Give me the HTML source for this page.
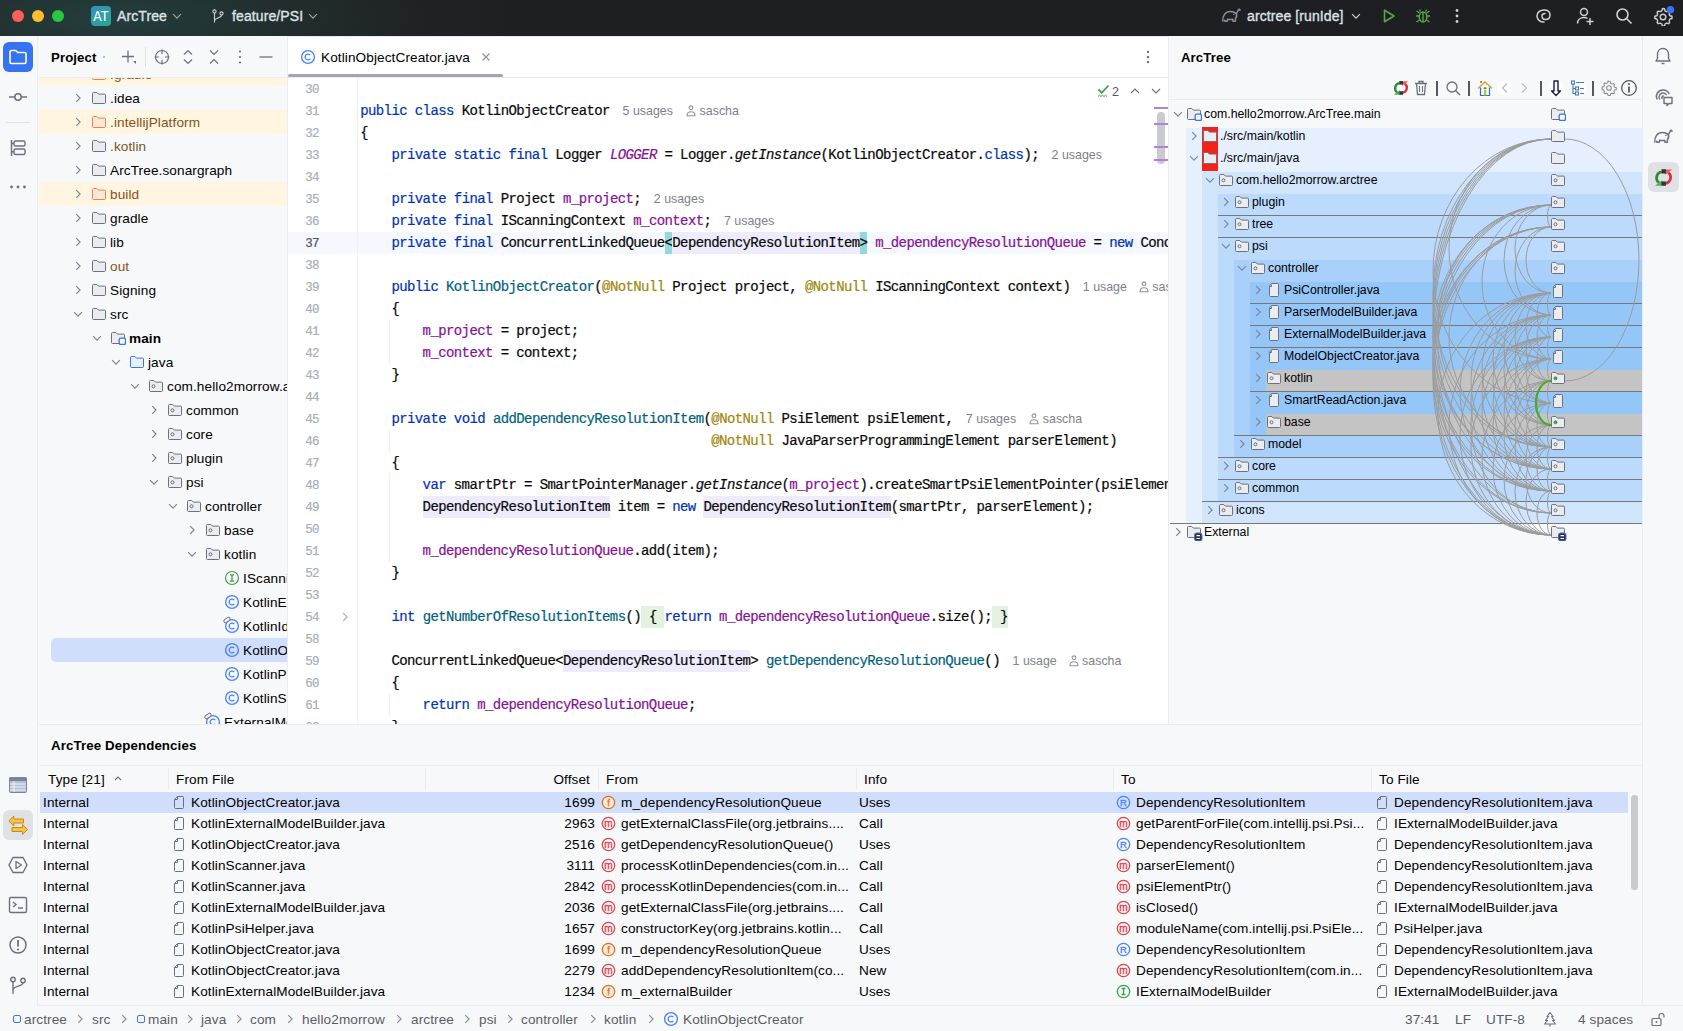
<!DOCTYPE html><html><head><meta charset="utf-8"><style>
*{box-sizing:border-box}
html,body{margin:0;padding:0}
body{width:1683px;height:1031px;position:relative;overflow:hidden;background:#F7F8FA;font-family:"Liberation Sans",sans-serif;color:#000}
div{position:absolute}
.t{white-space:pre;height:20px;line-height:20px;font-size:13.6px;color:#000;letter-spacing:0.1px}
.code{white-space:pre;font-family:"Liberation Mono",monospace;font-size:14px;letter-spacing:-0.6px;height:22px;line-height:22px;color:#080808;-webkit-text-stroke:0.2px currentColor}
.hint{font-family:"Liberation Sans",sans-serif;font-size:12.4px;color:#7D8187}
.kw{color:#0033B3}.fld{color:#871094}.ann{color:#9E880D}.mdecl{color:#00627A}.it{font-style:italic}
.lav,.teal,.fold{display:inline-block;height:22px;vertical-align:top}.lav{background:#EDEBFC}.teal{background:#93D9D9}.fold{background:#E3F1DE}
</style></head><body><div style="left:0;top:0;width:1683px;height:36px;background:radial-gradient(ellipse 420px 120px at 110px 18px,#243D3E 0%,#22302F 35%,#1F2224 75%,#1E1F22 100%)"></div><svg style="position:absolute;left:11px;top:9px;" width="14" height="14" viewBox="0 0 14 14"><circle cx="7" cy="7" r="6" fill="#FE5F57"/></svg><svg style="position:absolute;left:31px;top:9px;" width="14" height="14" viewBox="0 0 14 14"><circle cx="7" cy="7" r="6" fill="#FEBC2E"/></svg><svg style="position:absolute;left:51px;top:9px;" width="14" height="14" viewBox="0 0 14 14"><circle cx="7" cy="7" r="6" fill="#28C840"/></svg><div style="left:91px;top:6px;width:20px;height:20px;border-radius:4px;background:linear-gradient(135deg,#2F94C2,#2AA68C);color:#fff;font-size:14px;line-height:22px;text-align:center;font-family:'Liberation Mono';letter-spacing:-1.2px;text-indent:-1px">AT</div><div class="t" style="left:117px;top:6px;color:#DFE1E5;font-size:14px;-webkit-text-stroke:0.35px #DFE1E5">ArcTree</div><svg style="position:absolute;left:169px;top:8px;" width="16" height="16" viewBox="0 0 16 16"><path d="M4.1 6.2l3.9 3.9 3.9-3.9" stroke="#9DA0A8" stroke-width="1.2" fill="none"/></svg><svg style="position:absolute;left:210px;top:8px;" width="16" height="16" viewBox="0 0 16 16"><circle cx="4.5" cy="3.5" r="1.6" fill="none" stroke="#CED0D6" stroke-width="1.1"/><circle cx="11.5" cy="5.5" r="1.6" fill="none" stroke="#CED0D6" stroke-width="1.1"/><path d="M4.5 5.2v9.3M11.5 7.2c0 3-7 2.5-7 5.5" fill="none" stroke="#CED0D6" stroke-width="1.1"/></svg><div class="t" style="left:232px;top:6px;color:#DFE1E5;font-size:14px;-webkit-text-stroke:0.35px #DFE1E5">feature/PSI</div><svg style="position:absolute;left:305px;top:8px;" width="16" height="16" viewBox="0 0 16 16"><path d="M4.1 6.2l3.9 3.9 3.9-3.9" stroke="#9DA0A8" stroke-width="1.2" fill="none"/></svg><svg style="position:absolute;left:1221px;top:7px;" width="22" height="18" viewBox="0 0 22 18"><path d="M1.8 14.2C1.2 8.8 4.6 4.6 9.2 4.6c2.6 0 4.6.8 6 2 1.2-1 1.6-2.6 2.2-3.8.5-1 1.8-.7 1.5.5" fill="none" stroke="#8C8F96" stroke-width="1.5" stroke-linecap="round"/><path d="M15.2 6.6c.8 1.8.4 3.8-.8 5v2.6h-2.3l-.5-2c-1.6.5-3.4.5-5 0l-.5 2H3.8l-.3-1.5" fill="none" stroke="#8C8F96" stroke-width="1.5" stroke-linejoin="round"/><circle cx="12.8" cy="7.4" r=".7" fill="#8C8F96"/></svg><div class="t" style="left:1247px;top:6px;color:#DFE1E5;font-size:14px;-webkit-text-stroke:0.35px #DFE1E5">arctree [runIde]</div><svg style="position:absolute;left:1348px;top:8px;" width="16" height="16" viewBox="0 0 16 16"><path d="M4.1 6.2l3.9 3.9 3.9-3.9" stroke="#CED0D6" stroke-width="1.2" fill="none"/></svg><svg style="position:absolute;left:1380px;top:7px;" width="18" height="18" viewBox="0 0 18 18"><path d="M4.5 3.2v11.6l9.5-5.8z" fill="none" stroke="#57A64A" stroke-width="1.6" stroke-linejoin="round"/></svg><svg style="position:absolute;left:1414px;top:7px;" width="18" height="18" viewBox="0 0 18 18"><ellipse cx="9" cy="10" rx="3.8" ry="5" fill="none" stroke="#57A64A" stroke-width="1.5"/><path d="M9 5v10M5.2 9H2M12.8 9H16M5.5 13l-3 2M12.5 13l3 2M5.5 6l-3-2M12.5 6l3-2M6.5 4.5l-1-2M11.5 4.5l1-2" stroke="#57A64A" stroke-width="1.4"/></svg><svg style="position:absolute;left:1449px;top:7px;" width="16" height="18" viewBox="0 0 16 18"><circle cx="8" cy="3.5" r="1.4" fill="#CED0D6"/><circle cx="8" cy="9" r="1.4" fill="#CED0D6"/><circle cx="8" cy="14.5" r="1.4" fill="#CED0D6"/></svg><svg style="position:absolute;left:1534px;top:7px;" width="20" height="18" viewBox="0 0 20 18"><path d="M10 15c-4 0-7-2.5-7-6s3-6 7-6 6 2 6 5-2 4.5-4.5 4.5S8 11 8 9s1.5-2.5 3-2.5" fill="none" stroke="#CED0D6" stroke-width="1.5" stroke-linecap="round"/></svg><svg style="position:absolute;left:1575px;top:6px;" width="20" height="20" viewBox="0 0 20 20"><circle cx="9" cy="6" r="3.5" fill="none" stroke="#CED0D6" stroke-width="1.5"/><path d="M2.5 17.5c0-4 3-6 6.5-6 1.5 0 2.5.3 3.5.8" fill="none" stroke="#CED0D6" stroke-width="1.5"/><path d="M15 12v7M11.5 15.5h7" stroke="#CED0D6" stroke-width="1.5"/></svg><svg style="position:absolute;left:1615px;top:7px;" width="18" height="18" viewBox="0 0 18 18"><circle cx="7.5" cy="7.5" r="5.5" fill="none" stroke="#CED0D6" stroke-width="1.6"/><path d="M11.5 11.5l5 5" stroke="#CED0D6" stroke-width="1.6"/></svg><svg style="position:absolute;left:1653px;top:6px;" width="22" height="20" viewBox="0 0 22 20"><path d="M10 2.5l1.5 .3.5 2 1.6.9 2-.6 1.1 1.1-.6 2 .9 1.6 2 .5v2.2l-2 .5-.9 1.6.6 2-1.1 1.1-2-.6-1.6.9-.5 2h-2.2l-.5-2-1.6-.9-2 .6-1.1-1.1.6-2-.9-1.6-2-.5v-2.2l2-.5.9-1.6-.6-2 1.1-1.1 2 .6 1.6-.9.5-2z" fill="none" stroke="#CED0D6" stroke-width="1.4" stroke-linejoin="round"/><circle cx="10" cy="11" r="2.8" fill="none" stroke="#CED0D6" stroke-width="1.4"/><circle cx="17.5" cy="3.8" r="3.7" fill="#3574F0"/></svg><div style="left:39px;top:36px;width:249px;height:42px;background:#F7F8FA;border-bottom:1px solid #EBECF0"></div><div class="t" style="left:51px;top:48px;font-weight:bold;font-size:13.2px;color:#000">Project</div><svg style="position:absolute;left:100px;top:53px;" width="8" height="8" viewBox="0 0 8 8"><circle cx="4" cy="4" r="1" fill="#A8ADBD"/></svg><svg style="position:absolute;left:119px;top:48px;" width="18" height="18" viewBox="0 0 18 18"><path d="M9 2.5v12M3 8.5h12" stroke="#6C707E" stroke-width="1.3"/><path d="M14 13l3-0v3z" fill="#6C707E"/></svg><div style="left:145px;top:47px;width:1px;height:20px;background:#DFE1E5"></div><svg style="position:absolute;left:153px;top:48px;" width="18" height="18" viewBox="0 0 18 18"><circle cx="9" cy="9" r="6.5" fill="none" stroke="#6C707E" stroke-width="1.2"/><path d="M9 1.5v4.5M9 12v4.5M1.5 9H6M12 9h4.5" stroke="#6C707E" stroke-width="1.2"/></svg><svg style="position:absolute;left:179px;top:48px;" width="18" height="18" viewBox="0 0 18 18"><path d="M5 6.5L9 2.5l4 4M5 11.5l4 4 4-4" fill="none" stroke="#6C707E" stroke-width="1.2"/></svg><svg style="position:absolute;left:205px;top:48px;" width="18" height="18" viewBox="0 0 18 18"><path d="M5 2.5l4 4 4-4M5 15.5l4-4 4 4" fill="none" stroke="#6C707E" stroke-width="1.2"/></svg><svg style="position:absolute;left:231px;top:48px;" width="18" height="18" viewBox="0 0 18 18"><circle cx="9" cy="3.5" r="1.1" fill="#6C707E"/><circle cx="9" cy="9" r="1.1" fill="#6C707E"/><circle cx="9" cy="14.5" r="1.1" fill="#6C707E"/></svg><svg style="position:absolute;left:257px;top:48px;" width="18" height="18" viewBox="0 0 18 18"><path d="M2.5 9h13" stroke="#6C707E" stroke-width="1.3"/></svg><div style="left:39px;top:78px;width:248px;height:646px;overflow:hidden"><div style="left:0;top:-16px;width:249px;height:24px;background:#FFF5E0"></div><svg style="position:absolute;left:31px;top:-12px;" width="16" height="16" viewBox="0 0 16 16"><path d="M6.2 4.1l3.9 3.9-3.9 3.9" stroke="#818594" stroke-width="1.2" fill="none"/></svg><svg style="position:absolute;left:52px;top:-13px;" width="16" height="16" viewBox="0 0 16 16"><path d="M1.5 4.5a1 1 0 0 1 1-1h3.3l1.6 1.6h6.1a1 1 0 0 1 1 1v7.4a1 1 0 0 1-1 1h-11a1 1 0 0 1-1-1z" fill="#FCE8DA" stroke="#E8834A" stroke-linejoin="round"/></svg><div class="t" style="left:71px;top:-13px;color:#84531A;">.gradle</div><svg style="position:absolute;left:31px;top:12px;" width="16" height="16" viewBox="0 0 16 16"><path d="M6.2 4.1l3.9 3.9-3.9 3.9" stroke="#818594" stroke-width="1.2" fill="none"/></svg><svg style="position:absolute;left:52px;top:11px;" width="16" height="16" viewBox="0 0 16 16"><path d="M1.5 4.5a1 1 0 0 1 1-1h3.3l1.6 1.6h6.1a1 1 0 0 1 1 1v7.4a1 1 0 0 1-1 1h-11a1 1 0 0 1-1-1z" fill="#EBECF0" stroke="#6C707E" stroke-linejoin="round"/></svg><div class="t" style="left:71px;top:11px;">.idea</div><div style="left:0;top:32px;width:249px;height:24px;background:#FFF5E0"></div><svg style="position:absolute;left:31px;top:36px;" width="16" height="16" viewBox="0 0 16 16"><path d="M6.2 4.1l3.9 3.9-3.9 3.9" stroke="#818594" stroke-width="1.2" fill="none"/></svg><svg style="position:absolute;left:52px;top:35px;" width="16" height="16" viewBox="0 0 16 16"><path d="M1.5 4.5a1 1 0 0 1 1-1h3.3l1.6 1.6h6.1a1 1 0 0 1 1 1v7.4a1 1 0 0 1-1 1h-11a1 1 0 0 1-1-1z" fill="#FCE8DA" stroke="#E8834A" stroke-linejoin="round"/></svg><div class="t" style="left:71px;top:35px;color:#84531A;">.intellijPlatform</div><svg style="position:absolute;left:31px;top:60px;" width="16" height="16" viewBox="0 0 16 16"><path d="M6.2 4.1l3.9 3.9-3.9 3.9" stroke="#818594" stroke-width="1.2" fill="none"/></svg><svg style="position:absolute;left:52px;top:59px;" width="16" height="16" viewBox="0 0 16 16"><path d="M1.5 4.5a1 1 0 0 1 1-1h3.3l1.6 1.6h6.1a1 1 0 0 1 1 1v7.4a1 1 0 0 1-1 1h-11a1 1 0 0 1-1-1z" fill="#EBECF0" stroke="#6C707E" stroke-linejoin="round"/></svg><div class="t" style="left:71px;top:59px;color:#84531A;">.kotlin</div><svg style="position:absolute;left:31px;top:84px;" width="16" height="16" viewBox="0 0 16 16"><path d="M6.2 4.1l3.9 3.9-3.9 3.9" stroke="#818594" stroke-width="1.2" fill="none"/></svg><svg style="position:absolute;left:52px;top:83px;" width="16" height="16" viewBox="0 0 16 16"><path d="M1.5 4.5a1 1 0 0 1 1-1h3.3l1.6 1.6h6.1a1 1 0 0 1 1 1v7.4a1 1 0 0 1-1 1h-11a1 1 0 0 1-1-1z" fill="#EBECF0" stroke="#6C707E" stroke-linejoin="round"/></svg><div class="t" style="left:71px;top:83px;">ArcTree.sonargraph</div><div style="left:0;top:104px;width:249px;height:24px;background:#FFF5E0"></div><svg style="position:absolute;left:31px;top:108px;" width="16" height="16" viewBox="0 0 16 16"><path d="M6.2 4.1l3.9 3.9-3.9 3.9" stroke="#818594" stroke-width="1.2" fill="none"/></svg><svg style="position:absolute;left:52px;top:107px;" width="16" height="16" viewBox="0 0 16 16"><path d="M1.5 4.5a1 1 0 0 1 1-1h3.3l1.6 1.6h6.1a1 1 0 0 1 1 1v7.4a1 1 0 0 1-1 1h-11a1 1 0 0 1-1-1z" fill="#FCE8DA" stroke="#E8834A" stroke-linejoin="round"/></svg><div class="t" style="left:71px;top:107px;color:#84531A;">build</div><svg style="position:absolute;left:31px;top:132px;" width="16" height="16" viewBox="0 0 16 16"><path d="M6.2 4.1l3.9 3.9-3.9 3.9" stroke="#818594" stroke-width="1.2" fill="none"/></svg><svg style="position:absolute;left:52px;top:131px;" width="16" height="16" viewBox="0 0 16 16"><path d="M1.5 4.5a1 1 0 0 1 1-1h3.3l1.6 1.6h6.1a1 1 0 0 1 1 1v7.4a1 1 0 0 1-1 1h-11a1 1 0 0 1-1-1z" fill="#EBECF0" stroke="#6C707E" stroke-linejoin="round"/></svg><div class="t" style="left:71px;top:131px;">gradle</div><svg style="position:absolute;left:31px;top:156px;" width="16" height="16" viewBox="0 0 16 16"><path d="M6.2 4.1l3.9 3.9-3.9 3.9" stroke="#818594" stroke-width="1.2" fill="none"/></svg><svg style="position:absolute;left:52px;top:155px;" width="16" height="16" viewBox="0 0 16 16"><path d="M1.5 4.5a1 1 0 0 1 1-1h3.3l1.6 1.6h6.1a1 1 0 0 1 1 1v7.4a1 1 0 0 1-1 1h-11a1 1 0 0 1-1-1z" fill="#EBECF0" stroke="#6C707E" stroke-linejoin="round"/></svg><div class="t" style="left:71px;top:155px;">lib</div><svg style="position:absolute;left:31px;top:180px;" width="16" height="16" viewBox="0 0 16 16"><path d="M6.2 4.1l3.9 3.9-3.9 3.9" stroke="#818594" stroke-width="1.2" fill="none"/></svg><svg style="position:absolute;left:52px;top:179px;" width="16" height="16" viewBox="0 0 16 16"><path d="M1.5 4.5a1 1 0 0 1 1-1h3.3l1.6 1.6h6.1a1 1 0 0 1 1 1v7.4a1 1 0 0 1-1 1h-11a1 1 0 0 1-1-1z" fill="#EBECF0" stroke="#6C707E" stroke-linejoin="round"/></svg><div class="t" style="left:71px;top:179px;color:#84531A;">out</div><svg style="position:absolute;left:31px;top:204px;" width="16" height="16" viewBox="0 0 16 16"><path d="M6.2 4.1l3.9 3.9-3.9 3.9" stroke="#818594" stroke-width="1.2" fill="none"/></svg><svg style="position:absolute;left:52px;top:203px;" width="16" height="16" viewBox="0 0 16 16"><path d="M1.5 4.5a1 1 0 0 1 1-1h3.3l1.6 1.6h6.1a1 1 0 0 1 1 1v7.4a1 1 0 0 1-1 1h-11a1 1 0 0 1-1-1z" fill="#EBECF0" stroke="#6C707E" stroke-linejoin="round"/></svg><div class="t" style="left:71px;top:203px;">Signing</div><svg style="position:absolute;left:31px;top:228px;" width="16" height="16" viewBox="0 0 16 16"><path d="M4.1 6.2l3.9 3.9 3.9-3.9" stroke="#818594" stroke-width="1.2" fill="none"/></svg><svg style="position:absolute;left:52px;top:227px;" width="16" height="16" viewBox="0 0 16 16"><path d="M1.5 4.5a1 1 0 0 1 1-1h3.3l1.6 1.6h6.1a1 1 0 0 1 1 1v7.4a1 1 0 0 1-1 1h-11a1 1 0 0 1-1-1z" fill="#EBECF0" stroke="#6C707E" stroke-linejoin="round"/></svg><div class="t" style="left:71px;top:227px;">src</div><svg style="position:absolute;left:50px;top:252px;" width="16" height="16" viewBox="0 0 16 16"><path d="M4.1 6.2l3.9 3.9 3.9-3.9" stroke="#818594" stroke-width="1.2" fill="none"/></svg><svg style="position:absolute;left:71px;top:251px;" width="16" height="16" viewBox="0 0 16 16"><path d="M1.5 4.5a1 1 0 0 1 1-1h3.3l1.6 1.6h6.1a1 1 0 0 1 1 1v7.4a1 1 0 0 1-1 1h-11a1 1 0 0 1-1-1z" fill="#EBECF0" stroke="#6C707E" stroke-linejoin="round"/><rect x="9.2" y="9.2" width="6.3" height="6.3" rx="1.6" fill="#F7F8FA" stroke="#3574F0" stroke-width="1.3"/></svg><div class="t" style="left:90px;top:251px;font-weight:bold;">main</div><svg style="position:absolute;left:69px;top:276px;" width="16" height="16" viewBox="0 0 16 16"><path d="M4.1 6.2l3.9 3.9 3.9-3.9" stroke="#818594" stroke-width="1.2" fill="none"/></svg><svg style="position:absolute;left:90px;top:275px;" width="16" height="16" viewBox="0 0 16 16"><path d="M1.5 4.5a1 1 0 0 1 1-1h3.3l1.6 1.6h6.1a1 1 0 0 1 1 1v7.4a1 1 0 0 1-1 1h-11a1 1 0 0 1-1-1z" fill="#E7EFFD" stroke="#3574F0" stroke-linejoin="round"/></svg><div class="t" style="left:109px;top:275px;">java</div><svg style="position:absolute;left:88px;top:300px;" width="16" height="16" viewBox="0 0 16 16"><path d="M4.1 6.2l3.9 3.9 3.9-3.9" stroke="#818594" stroke-width="1.2" fill="none"/></svg><svg style="position:absolute;left:109px;top:299px;" width="16" height="16" viewBox="0 0 16 16"><path d="M1.5 4.5a1 1 0 0 1 1-1h3.3l1.6 1.6h6.1a1 1 0 0 1 1 1v7.4a1 1 0 0 1-1 1h-11a1 1 0 0 1-1-1z" fill="#EBECF0" stroke="#6C707E" stroke-linejoin="round"/><circle cx="5.5" cy="9.3" r="1.5" fill="none" stroke="#6C707E" stroke-width="1"/></svg><div class="t" style="left:128px;top:299px;">com.hello2morrow.arctree</div><svg style="position:absolute;left:107px;top:324px;" width="16" height="16" viewBox="0 0 16 16"><path d="M6.2 4.1l3.9 3.9-3.9 3.9" stroke="#818594" stroke-width="1.2" fill="none"/></svg><svg style="position:absolute;left:128px;top:323px;" width="16" height="16" viewBox="0 0 16 16"><path d="M1.5 4.5a1 1 0 0 1 1-1h3.3l1.6 1.6h6.1a1 1 0 0 1 1 1v7.4a1 1 0 0 1-1 1h-11a1 1 0 0 1-1-1z" fill="#EBECF0" stroke="#6C707E" stroke-linejoin="round"/><circle cx="5.5" cy="9.3" r="1.5" fill="none" stroke="#6C707E" stroke-width="1"/></svg><div class="t" style="left:147px;top:323px;">common</div><svg style="position:absolute;left:107px;top:348px;" width="16" height="16" viewBox="0 0 16 16"><path d="M6.2 4.1l3.9 3.9-3.9 3.9" stroke="#818594" stroke-width="1.2" fill="none"/></svg><svg style="position:absolute;left:128px;top:347px;" width="16" height="16" viewBox="0 0 16 16"><path d="M1.5 4.5a1 1 0 0 1 1-1h3.3l1.6 1.6h6.1a1 1 0 0 1 1 1v7.4a1 1 0 0 1-1 1h-11a1 1 0 0 1-1-1z" fill="#EBECF0" stroke="#6C707E" stroke-linejoin="round"/><circle cx="5.5" cy="9.3" r="1.5" fill="none" stroke="#6C707E" stroke-width="1"/></svg><div class="t" style="left:147px;top:347px;">core</div><svg style="position:absolute;left:107px;top:372px;" width="16" height="16" viewBox="0 0 16 16"><path d="M6.2 4.1l3.9 3.9-3.9 3.9" stroke="#818594" stroke-width="1.2" fill="none"/></svg><svg style="position:absolute;left:128px;top:371px;" width="16" height="16" viewBox="0 0 16 16"><path d="M1.5 4.5a1 1 0 0 1 1-1h3.3l1.6 1.6h6.1a1 1 0 0 1 1 1v7.4a1 1 0 0 1-1 1h-11a1 1 0 0 1-1-1z" fill="#EBECF0" stroke="#6C707E" stroke-linejoin="round"/><circle cx="5.5" cy="9.3" r="1.5" fill="none" stroke="#6C707E" stroke-width="1"/></svg><div class="t" style="left:147px;top:371px;">plugin</div><svg style="position:absolute;left:107px;top:396px;" width="16" height="16" viewBox="0 0 16 16"><path d="M4.1 6.2l3.9 3.9 3.9-3.9" stroke="#818594" stroke-width="1.2" fill="none"/></svg><svg style="position:absolute;left:128px;top:395px;" width="16" height="16" viewBox="0 0 16 16"><path d="M1.5 4.5a1 1 0 0 1 1-1h3.3l1.6 1.6h6.1a1 1 0 0 1 1 1v7.4a1 1 0 0 1-1 1h-11a1 1 0 0 1-1-1z" fill="#EBECF0" stroke="#6C707E" stroke-linejoin="round"/><circle cx="5.5" cy="9.3" r="1.5" fill="none" stroke="#6C707E" stroke-width="1"/></svg><div class="t" style="left:147px;top:395px;">psi</div><svg style="position:absolute;left:126px;top:420px;" width="16" height="16" viewBox="0 0 16 16"><path d="M4.1 6.2l3.9 3.9 3.9-3.9" stroke="#818594" stroke-width="1.2" fill="none"/></svg><svg style="position:absolute;left:147px;top:419px;" width="16" height="16" viewBox="0 0 16 16"><path d="M1.5 4.5a1 1 0 0 1 1-1h3.3l1.6 1.6h6.1a1 1 0 0 1 1 1v7.4a1 1 0 0 1-1 1h-11a1 1 0 0 1-1-1z" fill="#EBECF0" stroke="#6C707E" stroke-linejoin="round"/><circle cx="5.5" cy="9.3" r="1.5" fill="none" stroke="#6C707E" stroke-width="1"/></svg><div class="t" style="left:166px;top:419px;">controller</div><svg style="position:absolute;left:145px;top:444px;" width="16" height="16" viewBox="0 0 16 16"><path d="M6.2 4.1l3.9 3.9-3.9 3.9" stroke="#818594" stroke-width="1.2" fill="none"/></svg><svg style="position:absolute;left:166px;top:443px;" width="16" height="16" viewBox="0 0 16 16"><path d="M1.5 4.5a1 1 0 0 1 1-1h3.3l1.6 1.6h6.1a1 1 0 0 1 1 1v7.4a1 1 0 0 1-1 1h-11a1 1 0 0 1-1-1z" fill="#EBECF0" stroke="#6C707E" stroke-linejoin="round"/><circle cx="5.5" cy="9.3" r="1.5" fill="none" stroke="#6C707E" stroke-width="1"/></svg><div class="t" style="left:185px;top:443px;">base</div><svg style="position:absolute;left:145px;top:468px;" width="16" height="16" viewBox="0 0 16 16"><path d="M4.1 6.2l3.9 3.9 3.9-3.9" stroke="#818594" stroke-width="1.2" fill="none"/></svg><svg style="position:absolute;left:166px;top:467px;" width="16" height="16" viewBox="0 0 16 16"><path d="M1.5 4.5a1 1 0 0 1 1-1h3.3l1.6 1.6h6.1a1 1 0 0 1 1 1v7.4a1 1 0 0 1-1 1h-11a1 1 0 0 1-1-1z" fill="#EBECF0" stroke="#6C707E" stroke-linejoin="round"/><circle cx="5.5" cy="9.3" r="1.5" fill="none" stroke="#6C707E" stroke-width="1"/></svg><div class="t" style="left:185px;top:467px;">kotlin</div><svg style="position:absolute;left:185px;top:492px;" width="16" height="16" viewBox="0 0 16 16"><circle cx="8" cy="8" r="6.5" fill="none" stroke="#3C9F4A" stroke-width="1.2"/><path d="M6 4.8h4M8 4.8v6.4M6 11.2h4" stroke="#3C9F4A" stroke-width="1.3"/></svg><div class="t" style="left:204px;top:491px;">IScanningContext</div><svg style="position:absolute;left:185px;top:516px;" width="16" height="16" viewBox="0 0 16 16"><circle cx="8" cy="8" r="6.4" fill="none" stroke="#4682FA" stroke-width="1.35"/><path d="M10.3 6.2A2.9 2.9 0 1 0 10.3 9.8" fill="none" stroke="#4682FA" stroke-width="1.3"/></svg><div class="t" style="left:204px;top:515px;">KotlinExternalModelBuilder</div><svg style="position:absolute;left:185px;top:540px;" width="16" height="16" viewBox="0 0 16 16"><circle cx="8" cy="8" r="6.4" fill="none" stroke="#4682FA" stroke-width="1.35"/><path d="M10.3 6.2A2.9 2.9 0 1 0 10.3 9.8" fill="none" stroke="#4682FA" stroke-width="1.3"/></svg><svg style="position:absolute;left:183px;top:537px;" width="10" height="10" viewBox="0 0 10 10"><rect x="1.5" y="3.3" width="7" height="3.4" rx="1.7" transform="rotate(-35 5 5)" fill="#F7F8FA" stroke="#6C707E" stroke-width="1"/></svg><div class="t" style="left:204px;top:539px;">KotlinIdentifier</div><div style="left:12px;top:560px;width:240px;height:24px;background:#D0DEFC;border-radius:5px"></div><svg style="position:absolute;left:185px;top:564px;" width="16" height="16" viewBox="0 0 16 16"><circle cx="8" cy="8" r="6.4" fill="none" stroke="#4682FA" stroke-width="1.35"/><path d="M10.3 6.2A2.9 2.9 0 1 0 10.3 9.8" fill="none" stroke="#4682FA" stroke-width="1.3"/></svg><div class="t" style="left:204px;top:563px;">KotlinObjectCreator</div><svg style="position:absolute;left:185px;top:588px;" width="16" height="16" viewBox="0 0 16 16"><circle cx="8" cy="8" r="6.4" fill="none" stroke="#4682FA" stroke-width="1.35"/><path d="M10.3 6.2A2.9 2.9 0 1 0 10.3 9.8" fill="none" stroke="#4682FA" stroke-width="1.3"/></svg><div class="t" style="left:204px;top:587px;">KotlinPsiHelper</div><svg style="position:absolute;left:185px;top:612px;" width="16" height="16" viewBox="0 0 16 16"><circle cx="8" cy="8" r="6.4" fill="none" stroke="#4682FA" stroke-width="1.35"/><path d="M10.3 6.2A2.9 2.9 0 1 0 10.3 9.8" fill="none" stroke="#4682FA" stroke-width="1.3"/></svg><div class="t" style="left:204px;top:611px;">KotlinScanner</div><svg style="position:absolute;left:166px;top:636px;" width="16" height="16" viewBox="0 0 16 16"><circle cx="8" cy="8" r="6.4" fill="none" stroke="#4682FA" stroke-width="1.35"/><path d="M10.3 6.2A2.9 2.9 0 1 0 10.3 9.8" fill="none" stroke="#4682FA" stroke-width="1.3"/></svg><svg style="position:absolute;left:164px;top:633px;" width="10" height="10" viewBox="0 0 10 10"><rect x="1.5" y="3.3" width="7" height="3.4" rx="1.7" transform="rotate(-35 5 5)" fill="#F7F8FA" stroke="#6C707E" stroke-width="1"/></svg><div class="t" style="left:185px;top:635px;">ExternalModelBuilder</div></div><div style="left:287px;top:36px;width:1px;height:689px;background:#EBECF0"></div><div style="left:288px;top:36px;width:880px;height:689px;background:#fff;border-top:1px solid #EBECF0"></div><div style="left:288px;top:77px;width:880px;height:1px;background:#EBECF0"></div><svg style="position:absolute;left:300px;top:49px;" width="16" height="16" viewBox="0 0 16 16"><circle cx="8" cy="8" r="6.4" fill="none" stroke="#4682FA" stroke-width="1.35"/><path d="M10.3 6.2A2.9 2.9 0 1 0 10.3 9.8" fill="none" stroke="#4682FA" stroke-width="1.3"/></svg><div class="t" style="left:321px;top:48px;font-size:13.6px;color:#000">KotlinObjectCreator.java</div><svg style="position:absolute;left:480px;top:51px;" width="12" height="12" viewBox="0 0 12 12"><path d="M2.5 2.5l7 7M9.5 2.5l-7 7" stroke="#8C8F96" stroke-width="1.1"/></svg><div style="left:288px;top:74px;width:215px;height:3px;background:#A0A5B2;border-radius:1.5px"></div><svg style="position:absolute;left:1142px;top:49px;" width="12" height="16" viewBox="0 0 12 16"><circle cx="6" cy="3" r="1.2" fill="#6C707E"/><circle cx="6" cy="8" r="1.2" fill="#6C707E"/><circle cx="6" cy="13" r="1.2" fill="#6C707E"/></svg><div style="left:288px;top:232px;width:880px;height:22px;background:#F5F8FE"></div><div style="left:357px;top:78px;width:1px;height:647px;background:#F0F1F4"></div><div style="left:288px;top:78px;width:880px;height:646px;overflow:hidden"><div class="code" style="left:0px;top:1px;width:31px;text-align:right;color:#A8ADBA;font-size:12.5px">30</div><div class="code" style="left:0px;top:23px;width:31px;text-align:right;color:#A8ADBA;font-size:12.5px">31</div><div class="code" style="left:72.2px;top:22px"><span class="kw">public</span> <span class="kw">class</span> KotlinObjectCreator</div><div class="hint" style="left:334.6px;top:22px;height:22px;line-height:22px;white-space:pre">5 usages</div><svg style="position:absolute;left:398.0999999999999px;top:27px;" width="11" height="12" viewBox="0 0 11 12"><circle cx="5" cy="2.8" r="1.9" fill="none" stroke="#8F939B" stroke-width="1.1"/><path d="M1 10.8c0-2.6 1.6-4 4-4s4 1.4 4 4z" fill="none" stroke="#8F939B" stroke-width="1.1" stroke-linejoin="round"/></svg><div class="hint" style="left:411.6px;top:22px;height:22px;line-height:22px;white-space:pre">sascha</div><div class="code" style="left:0px;top:45px;width:31px;text-align:right;color:#A8ADBA;font-size:12.5px">32</div><div class="code" style="left:72.2px;top:44px">{</div><div class="code" style="left:0px;top:67px;width:31px;text-align:right;color:#A8ADBA;font-size:12.5px">33</div><div class="code" style="left:72.2px;top:66px">    <span class="kw">private</span> <span class="kw">static</span> <span class="kw">final</span> Logger <span class="fld it">LOGGER</span> = Logger.<span class="it">getInstance</span>(KotlinObjectCreator.<span class="kw">class</span>);</div><div class="hint" style="left:763.6px;top:66px;height:22px;line-height:22px;white-space:pre">2 usages</div><div class="code" style="left:0px;top:89px;width:31px;text-align:right;color:#A8ADBA;font-size:12.5px">34</div><div class="code" style="left:0px;top:111px;width:31px;text-align:right;color:#A8ADBA;font-size:12.5px">35</div><div class="code" style="left:72.2px;top:110px">    <span class="kw">private</span> <span class="kw">final</span> Project <span class="fld">m_project</span>;</div><div class="hint" style="left:365.8px;top:110px;height:22px;line-height:22px;white-space:pre">2 usages</div><div class="code" style="left:0px;top:133px;width:31px;text-align:right;color:#A8ADBA;font-size:12.5px">36</div><div class="code" style="left:72.2px;top:132px">    <span class="kw">private</span> <span class="kw">final</span> IScanningContext <span class="fld">m_context</span>;</div><div class="hint" style="left:436.0px;top:132px;height:22px;line-height:22px;white-space:pre">7 usages</div><div class="code" style="left:0px;top:155px;width:31px;text-align:right;color:#4F5563;font-size:12.5px">37</div><div class="code" style="left:72.2px;top:154px">    <span class="kw">private</span> <span class="kw">final</span> ConcurrentLinkedQueue<span class="teal">&lt;</span><span class="lav">DependencyResolutionItem</span><span class="teal">&gt;</span> <span class="fld">m_dependencyResolutionQueue</span> = <span class="kw">new</span> Conc</div><div class="code" style="left:0px;top:177px;width:31px;text-align:right;color:#A8ADBA;font-size:12.5px">38</div><div class="code" style="left:0px;top:199px;width:31px;text-align:right;color:#A8ADBA;font-size:12.5px">39</div><div class="code" style="left:72.2px;top:198px">    <span class="kw">public</span> <span class="mdecl">KotlinObjectCreator</span>(<span class="ann">@NotNull</span> Project project, <span class="ann">@NotNull</span> IScanningContext context)</div><div class="hint" style="left:794.8px;top:198px;height:22px;line-height:22px;white-space:pre">1 usage</div><svg style="position:absolute;left:850.8px;top:203px;" width="11" height="12" viewBox="0 0 11 12"><circle cx="5" cy="2.8" r="1.9" fill="none" stroke="#8F939B" stroke-width="1.1"/><path d="M1 10.8c0-2.6 1.6-4 4-4s4 1.4 4 4z" fill="none" stroke="#8F939B" stroke-width="1.1" stroke-linejoin="round"/></svg><div class="hint" style="left:864.3px;top:198px;height:22px;line-height:22px;white-space:pre">sascha</div><div class="code" style="left:0px;top:221px;width:31px;text-align:right;color:#A8ADBA;font-size:12.5px">40</div><div class="code" style="left:72.2px;top:220px">    {</div><div class="code" style="left:0px;top:243px;width:31px;text-align:right;color:#A8ADBA;font-size:12.5px">41</div><div class="code" style="left:72.2px;top:242px">        <span class="fld">m_project</span> = project;</div><div class="code" style="left:0px;top:265px;width:31px;text-align:right;color:#A8ADBA;font-size:12.5px">42</div><div class="code" style="left:72.2px;top:264px">        <span class="fld">m_context</span> = context;</div><div class="code" style="left:0px;top:287px;width:31px;text-align:right;color:#A8ADBA;font-size:12.5px">43</div><div class="code" style="left:72.2px;top:286px">    }</div><div class="code" style="left:0px;top:309px;width:31px;text-align:right;color:#A8ADBA;font-size:12.5px">44</div><div class="code" style="left:0px;top:331px;width:31px;text-align:right;color:#A8ADBA;font-size:12.5px">45</div><div class="code" style="left:72.2px;top:330px">    <span class="kw">private</span> <span class="kw">void</span> <span class="mdecl">addDependencyResolutionItem</span>(<span class="ann">@NotNull</span> PsiElement psiElement,</div><div class="hint" style="left:677.8px;top:330px;height:22px;line-height:22px;white-space:pre">7 usages</div><svg style="position:absolute;left:741.3px;top:335px;" width="11" height="12" viewBox="0 0 11 12"><circle cx="5" cy="2.8" r="1.9" fill="none" stroke="#8F939B" stroke-width="1.1"/><path d="M1 10.8c0-2.6 1.6-4 4-4s4 1.4 4 4z" fill="none" stroke="#8F939B" stroke-width="1.1" stroke-linejoin="round"/></svg><div class="hint" style="left:754.8px;top:330px;height:22px;line-height:22px;white-space:pre">sascha</div><div class="code" style="left:0px;top:353px;width:31px;text-align:right;color:#A8ADBA;font-size:12.5px">46</div><div class="code" style="left:72.2px;top:352px">                                             <span class="ann">@NotNull</span> JavaParserProgrammingElement parserElement)</div><div class="code" style="left:0px;top:375px;width:31px;text-align:right;color:#A8ADBA;font-size:12.5px">47</div><div class="code" style="left:72.2px;top:374px">    {</div><div class="code" style="left:0px;top:397px;width:31px;text-align:right;color:#A8ADBA;font-size:12.5px">48</div><div class="code" style="left:72.2px;top:396px">        <span class="kw">var</span> smartPtr = SmartPointerManager.<span class="it">getInstance</span>(<span class="fld">m_project</span>).createSmartPsiElementPointer(psiElemen</div><div class="code" style="left:0px;top:419px;width:31px;text-align:right;color:#A8ADBA;font-size:12.5px">49</div><div class="code" style="left:72.2px;top:418px">        <span class="lav">DependencyResolutionItem</span> item = <span class="kw">new</span> <span class="lav">DependencyResolutionItem</span>(smartPtr, parserElement);</div><div class="code" style="left:0px;top:441px;width:31px;text-align:right;color:#A8ADBA;font-size:12.5px">50</div><div class="code" style="left:0px;top:463px;width:31px;text-align:right;color:#A8ADBA;font-size:12.5px">51</div><div class="code" style="left:72.2px;top:462px">        <span class="fld">m_dependencyResolutionQueue</span>.add(item);</div><div class="code" style="left:0px;top:485px;width:31px;text-align:right;color:#A8ADBA;font-size:12.5px">52</div><div class="code" style="left:72.2px;top:484px">    }</div><div class="code" style="left:0px;top:507px;width:31px;text-align:right;color:#A8ADBA;font-size:12.5px">53</div><div class="code" style="left:0px;top:529px;width:31px;text-align:right;color:#A8ADBA;font-size:12.5px">54</div><div class="code" style="left:72.2px;top:528px">    <span class="kw">int</span> <span class="mdecl">getNumberOfResolutionItems</span>()<span class="fold"> { </span><span class="kw">return</span> <span class="fld">m_dependencyResolutionQueue</span>.size();<span class="fold"> }</span></div><div class="code" style="left:0px;top:551px;width:31px;text-align:right;color:#A8ADBA;font-size:12.5px">58</div><div class="code" style="left:0px;top:573px;width:31px;text-align:right;color:#A8ADBA;font-size:12.5px">59</div><div class="code" style="left:72.2px;top:572px">    ConcurrentLinkedQueue&lt;<span class="lav">DependencyResolutionItem</span>&gt; <span class="mdecl">getDependencyResolutionQueue</span>()</div><div class="hint" style="left:724.6px;top:572px;height:22px;line-height:22px;white-space:pre">1 usage</div><svg style="position:absolute;left:780.5999999999999px;top:577px;" width="11" height="12" viewBox="0 0 11 12"><circle cx="5" cy="2.8" r="1.9" fill="none" stroke="#8F939B" stroke-width="1.1"/><path d="M1 10.8c0-2.6 1.6-4 4-4s4 1.4 4 4z" fill="none" stroke="#8F939B" stroke-width="1.1" stroke-linejoin="round"/></svg><div class="hint" style="left:794.1px;top:572px;height:22px;line-height:22px;white-space:pre">sascha</div><div class="code" style="left:0px;top:595px;width:31px;text-align:right;color:#A8ADBA;font-size:12.5px">60</div><div class="code" style="left:72.2px;top:594px">    {</div><div class="code" style="left:0px;top:617px;width:31px;text-align:right;color:#A8ADBA;font-size:12.5px">61</div><div class="code" style="left:72.2px;top:616px">        <span class="kw">return</span> <span class="fld">m_dependencyResolutionQueue</span>;</div><div class="code" style="left:0px;top:639px;width:31px;text-align:right;color:#A8ADBA;font-size:12.5px">62</div><div class="code" style="left:72.2px;top:638px">    }</div><svg style="position:absolute;left:49px;top:531px;" width="16" height="16" viewBox="0 0 16 16"><path d="M6.2 4.1l3.9 3.9-3.9 3.9" stroke="#A8ADBA" stroke-width="1.2" fill="none"/></svg><div style="left:101px;top:242px;width:1px;height:44px;background:#EDEEF1"></div><div style="left:101px;top:352px;width:1px;height:22px;background:#EDEEF1"></div><div style="left:101px;top:396px;width:1px;height:88px;background:#EDEEF1"></div><div style="left:101px;top:616px;width:1px;height:22px;background:#EDEEF1"></div></div><svg style="position:absolute;left:1096px;top:83px;" width="16" height="16" viewBox="0 0 16 16"><path d="M2.5 6.5l3.2 3.3 6.8-7.3" fill="none" stroke="#3C9F4A" stroke-width="1.8"/><path d="M2 13.5l1.5-1.3 1.5 1.3 1.5-1.3 1.5 1.3 1.5-1.3 1.5 1.3" fill="none" stroke="#3C9F4A" stroke-width="1"/></svg><div class="t" style="left:1112px;top:82px;font-size:12.5px;color:#55585E">2</div><svg style="position:absolute;left:1128px;top:84px;" width="14" height="14" viewBox="0 0 14 14"><path d="M3 9l4-4 4 4" fill="none" stroke="#6C707E" stroke-width="1.1"/></svg><svg style="position:absolute;left:1149px;top:84px;" width="14" height="14" viewBox="0 0 14 14"><path d="M3 5l4 4 4-4" fill="none" stroke="#6C707E" stroke-width="1.1"/></svg><div style="left:1157px;top:112px;width:8px;height:52px;background:#C9CACE;border-radius:4px"></div><div style="left:1154px;top:107px;width:14px;height:2px;background:#B57FE0"></div><div style="left:1154px;top:123px;width:14px;height:2px;background:#B57FE0"></div><div style="left:1154px;top:146px;width:14px;height:2px;background:#B57FE0"></div><div style="left:1154px;top:159px;width:14px;height:2px;background:#B57FE0"></div><div style="left:1168px;top:36px;width:1px;height:689px;background:#EBECF0"></div><div style="left:1169px;top:36px;width:474px;height:689px;background:#F7F8FA"></div><div class="t" style="left:1181px;top:48px;font-weight:bold;font-size:13.2px">ArcTree</div><svg style="position:absolute;left:1393px;top:80px;" width="17" height="17" viewBox="0 0 17 17"><g transform="scale(1.0)"><path d="M6.5 3.2A5 5 0 0 0 4.2 12.2" fill="none" stroke="#2F8A35" stroke-width="2.3"/><path d="M0.8 14.8h6v-4.5z" fill="#4CAF50"/><path d="M9.5 12.8A5 5 0 0 0 11.8 3.8" fill="none" stroke="#D9303A" stroke-width="2.3"/><path d="M15.2 1.2h-6v4.5z" fill="#E55B5B"/><rect x="6.3" y="1" width="3.6" height="3.6" fill="#333"/><rect x="6.3" y="11.2" width="3.6" height="3.6" fill="#333"/></g></svg><svg style="position:absolute;left:1412px;top:79px;" width="18" height="18" viewBox="0 0 18 18"><path d="M3 4.5h12M7 4.5V2.5h4v2M4.5 4.5l1 11h7l1-11" fill="none" stroke="#6C707E" stroke-width="1.3"/><path d="M7.5 7v6M10.5 7v6" stroke="#6C707E" stroke-width="1.1"/></svg><div style="left:1436px;top:81px;width:2px;height:15px;background:#55585E"></div><div style="left:1468px;top:81px;width:2px;height:15px;background:#55585E"></div><div style="left:1540px;top:81px;width:2px;height:15px;background:#55585E"></div><div style="left:1592px;top:81px;width:2px;height:15px;background:#55585E"></div><svg style="position:absolute;left:1444px;top:79px;" width="18" height="18" viewBox="0 0 18 18"><circle cx="8" cy="8" r="5" fill="none" stroke="#6C707E" stroke-width="1.3"/><path d="M11.5 11.5l4.5 4.5" stroke="#6C707E" stroke-width="1.4"/></svg><svg style="position:absolute;left:1476px;top:79px;" width="18" height="18" viewBox="0 0 18 18"><path d="M4.5 8.5v8h9v-8" fill="#F4F8FF" stroke="#3A6BC2" stroke-width="1.2"/><path d="M2 9.5L9 3l7 6.5" fill="none" stroke="#D9A53A" stroke-width="1.6"/><path d="M5 4V2" stroke="#C9482A" stroke-width="1.4"/><rect x="8" y="11" width="2.2" height="5.5" fill="#B7C92A"/><rect x="7.8" y="8.3" width="2.6" height="1.8" fill="#2E9B45"/></svg><svg style="position:absolute;left:1496px;top:79px;" width="18" height="18" viewBox="0 0 18 18"><circle cx="9" cy="9" r="7" fill="#fff" opacity=".8"/><path d="M11 4.5L6.5 9l4.5 4.5" fill="none" stroke="#B8BBC2" stroke-width="1.2"/></svg><svg style="position:absolute;left:1515px;top:79px;" width="18" height="18" viewBox="0 0 18 18"><path d="M7 4.5L11.5 9 7 13.5" fill="none" stroke="#B8BBC2" stroke-width="1.2"/></svg><svg style="position:absolute;left:1547px;top:79px;" width="18" height="18" viewBox="0 0 18 18"><circle cx="9" cy="9" r="8" fill="#fff" opacity=".7"/><path d="M7 2v10H4.5L9 16.5l4.5-4.5H11V2z" fill="none" stroke="#1B1B4B" stroke-width="1.4" stroke-linejoin="round"/></svg><svg style="position:absolute;left:1569px;top:79px;" width="18" height="18" viewBox="0 0 18 18"><circle cx="9" cy="9" r="8" fill="#fff" opacity=".7"/><rect x="2.5" y="2" width="3" height="3" fill="none" stroke="#4A76B8" stroke-width="1.1"/><rect x="6.5" y="8" width="3" height="3" fill="none" stroke="#4A76B8" stroke-width="1.1"/><rect x="6.5" y="13" width="3" height="3" fill="none" stroke="#4A76B8" stroke-width="1.1"/><path d="M4 5v9.5h2.5M4 9.5h2.5M7 3.5h8M11 9.5h4M11 14.5h4" fill="none" stroke="#4A76B8" stroke-width="1.1"/></svg><svg style="position:absolute;left:1600px;top:79px;" width="18" height="18" viewBox="0 0 18 18"><path d="M9 2.5l1.3.2.4 1.6 1.3.7 1.6-.5.9.9-.5 1.6.7 1.3 1.6.4v1.8l-1.6.4-.7 1.3.5 1.6-.9.9-1.6-.5-1.3.7-.4 1.6H8.1l-.4-1.6-1.3-.7-1.6.5-.9-.9.5-1.6-.7-1.3-1.6-.4V8.1l1.6-.4.7-1.3-.5-1.6.9-.9 1.6.5 1.3-.7.4-1.6z" fill="none" stroke="#8C8F96" stroke-width="1.1"/><circle cx="9" cy="9" r="2.3" fill="none" stroke="#8C8F96" stroke-width="1.1"/></svg><svg style="position:absolute;left:1620px;top:79px;" width="18" height="18" viewBox="0 0 18 18"><circle cx="9" cy="9" r="7.3" fill="none" stroke="#55585E" stroke-width="1.3"/><path d="M9 7.5v6" stroke="#55585E" stroke-width="1.8"/><circle cx="9" cy="5" r="1.1" fill="#55585E"/></svg><div style="left:1169px;top:99px;width:474px;height:1px;background:#EBECF0"></div><div style="left:1186px;top:128px;width:456px;height:396px;background:#E6EFFD"></div><div style="left:1202px;top:172px;width:440px;height:352px;background:#D0E4FC"></div><div style="left:1218px;top:194px;width:424px;height:308px;background:#BBDAFC"></div><div style="left:1234px;top:260px;width:408px;height:198px;background:#A8D0FA"></div><div style="left:1250px;top:282px;width:392px;height:154px;background:#95C6F8"></div><div style="left:1266px;top:370px;width:376px;height:22px;background:#C4C4C4"></div><div style="left:1266px;top:414px;width:376px;height:22px;background:#C4C4C4"></div><div style="left:1202px;top:127px;width:16px;height:44px;background:#F0231B"></div><div style="left:1218px;top:215px;width:424px;height:1px;background:#777"></div><div style="left:1218px;top:237px;width:424px;height:1px;background:#777"></div><div style="left:1250px;top:303px;width:392px;height:1px;background:#777"></div><div style="left:1250px;top:325px;width:392px;height:1px;background:#777"></div><div style="left:1250px;top:347px;width:392px;height:1px;background:#777"></div><div style="left:1250px;top:391px;width:392px;height:1px;background:#777"></div><div style="left:1234px;top:435px;width:408px;height:1px;background:#777"></div><div style="left:1218px;top:457px;width:424px;height:1px;background:#777"></div><div style="left:1218px;top:479px;width:424px;height:1px;background:#777"></div><div style="left:1202px;top:501px;width:440px;height:1px;background:#777"></div><div style="left:1170px;top:523px;width:472px;height:1px;background:#777"></div><svg style="position:absolute;left:1170px;top:106px;" width="16" height="16" viewBox="0 0 16 16"><path d="M4.1 6.2l3.9 3.9 3.9-3.9" stroke="#818594" stroke-width="1.2" fill="none"/></svg><svg style="position:absolute;left:1186px;top:105px;" width="16" height="16" viewBox="0 0 16 16"><path d="M1.5 4.5a1 1 0 0 1 1-1h3.3l1.6 1.6h6.1a1 1 0 0 1 1 1v7.4a1 1 0 0 1-1 1h-11a1 1 0 0 1-1-1z" fill="#EBECF0" stroke="#6C707E" stroke-linejoin="round"/><rect x="9.2" y="9.2" width="6.3" height="6.3" rx="1.6" fill="#F7F8FA" stroke="#3574F0" stroke-width="1.3"/></svg><div class="t" style="left:1204px;top:104px;font-size:12.3px;color:#000;letter-spacing:0">com.hello2morrow.ArcTree.main</div><svg style="position:absolute;left:1550px;top:105px;" width="16" height="16" viewBox="0 0 16 16"><path d="M1.5 4.5a1 1 0 0 1 1-1h3.3l1.6 1.6h6.1a1 1 0 0 1 1 1v7.4a1 1 0 0 1-1 1h-11a1 1 0 0 1-1-1z" fill="#EBECF0" stroke="#6C707E" stroke-linejoin="round"/><rect x="9.2" y="9.2" width="6.3" height="6.3" rx="1.6" fill="#F7F8FA" stroke="#3574F0" stroke-width="1.3"/></svg><svg style="position:absolute;left:1186px;top:128px;" width="16" height="16" viewBox="0 0 16 16"><path d="M6.2 4.1l3.9 3.9-3.9 3.9" stroke="#818594" stroke-width="1.2" fill="none"/></svg><svg style="position:absolute;left:1202px;top:127px;" width="16" height="16" viewBox="0 0 16 16"><path d="M1.5 4.5a1 1 0 0 1 1-1h3.3l1.6 1.6h6.1a1 1 0 0 1 1 1v7.4a1 1 0 0 1-1 1h-11a1 1 0 0 1-1-1z" fill="#EBECF0" stroke="#6C707E" stroke-linejoin="round"/></svg><div class="t" style="left:1220px;top:126px;font-size:12.3px;color:#000;letter-spacing:0">./src/main/kotlin</div><svg style="position:absolute;left:1550px;top:127px;" width="16" height="16" viewBox="0 0 16 16"><path d="M1.5 4.5a1 1 0 0 1 1-1h3.3l1.6 1.6h6.1a1 1 0 0 1 1 1v7.4a1 1 0 0 1-1 1h-11a1 1 0 0 1-1-1z" fill="#EBECF0" stroke="#6C707E" stroke-linejoin="round"/></svg><svg style="position:absolute;left:1186px;top:150px;" width="16" height="16" viewBox="0 0 16 16"><path d="M4.1 6.2l3.9 3.9 3.9-3.9" stroke="#818594" stroke-width="1.2" fill="none"/></svg><svg style="position:absolute;left:1202px;top:149px;" width="16" height="16" viewBox="0 0 16 16"><path d="M1.5 4.5a1 1 0 0 1 1-1h3.3l1.6 1.6h6.1a1 1 0 0 1 1 1v7.4a1 1 0 0 1-1 1h-11a1 1 0 0 1-1-1z" fill="#EBECF0" stroke="#6C707E" stroke-linejoin="round"/></svg><div class="t" style="left:1220px;top:148px;font-size:12.3px;color:#000;letter-spacing:0">./src/main/java</div><svg style="position:absolute;left:1550px;top:149px;" width="16" height="16" viewBox="0 0 16 16"><path d="M1.5 4.5a1 1 0 0 1 1-1h3.3l1.6 1.6h6.1a1 1 0 0 1 1 1v7.4a1 1 0 0 1-1 1h-11a1 1 0 0 1-1-1z" fill="#EBECF0" stroke="#6C707E" stroke-linejoin="round"/></svg><svg style="position:absolute;left:1202px;top:172px;" width="16" height="16" viewBox="0 0 16 16"><path d="M4.1 6.2l3.9 3.9 3.9-3.9" stroke="#818594" stroke-width="1.2" fill="none"/></svg><svg style="position:absolute;left:1218px;top:171px;" width="16" height="16" viewBox="0 0 16 16"><path d="M1.5 4.5a1 1 0 0 1 1-1h3.3l1.6 1.6h6.1a1 1 0 0 1 1 1v7.4a1 1 0 0 1-1 1h-11a1 1 0 0 1-1-1z" fill="#EBECF0" stroke="#6C707E" stroke-linejoin="round"/><circle cx="5.5" cy="9.3" r="1.5" fill="none" stroke="#6C707E" stroke-width="1"/></svg><div class="t" style="left:1236px;top:170px;font-size:12.3px;color:#000;letter-spacing:0">com.hello2morrow.arctree</div><svg style="position:absolute;left:1550px;top:171px;" width="16" height="16" viewBox="0 0 16 16"><path d="M1.5 4.5a1 1 0 0 1 1-1h3.3l1.6 1.6h6.1a1 1 0 0 1 1 1v7.4a1 1 0 0 1-1 1h-11a1 1 0 0 1-1-1z" fill="#EBECF0" stroke="#6C707E" stroke-linejoin="round"/><circle cx="5.5" cy="9.3" r="1.5" fill="none" stroke="#6C707E" stroke-width="1"/></svg><svg style="position:absolute;left:1218px;top:194px;" width="16" height="16" viewBox="0 0 16 16"><path d="M6.2 4.1l3.9 3.9-3.9 3.9" stroke="#818594" stroke-width="1.2" fill="none"/></svg><svg style="position:absolute;left:1234px;top:193px;" width="16" height="16" viewBox="0 0 16 16"><path d="M1.5 4.5a1 1 0 0 1 1-1h3.3l1.6 1.6h6.1a1 1 0 0 1 1 1v7.4a1 1 0 0 1-1 1h-11a1 1 0 0 1-1-1z" fill="#EBECF0" stroke="#6C707E" stroke-linejoin="round"/><circle cx="5.5" cy="9.3" r="1.5" fill="none" stroke="#6C707E" stroke-width="1"/></svg><div class="t" style="left:1252px;top:192px;font-size:12.3px;color:#000;letter-spacing:0">plugin</div><svg style="position:absolute;left:1550px;top:193px;" width="16" height="16" viewBox="0 0 16 16"><path d="M1.5 4.5a1 1 0 0 1 1-1h3.3l1.6 1.6h6.1a1 1 0 0 1 1 1v7.4a1 1 0 0 1-1 1h-11a1 1 0 0 1-1-1z" fill="#EBECF0" stroke="#6C707E" stroke-linejoin="round"/><circle cx="5.5" cy="9.3" r="1.5" fill="none" stroke="#6C707E" stroke-width="1"/></svg><svg style="position:absolute;left:1218px;top:216px;" width="16" height="16" viewBox="0 0 16 16"><path d="M6.2 4.1l3.9 3.9-3.9 3.9" stroke="#818594" stroke-width="1.2" fill="none"/></svg><svg style="position:absolute;left:1234px;top:215px;" width="16" height="16" viewBox="0 0 16 16"><path d="M1.5 4.5a1 1 0 0 1 1-1h3.3l1.6 1.6h6.1a1 1 0 0 1 1 1v7.4a1 1 0 0 1-1 1h-11a1 1 0 0 1-1-1z" fill="#EBECF0" stroke="#6C707E" stroke-linejoin="round"/><circle cx="5.5" cy="9.3" r="1.5" fill="none" stroke="#6C707E" stroke-width="1"/></svg><div class="t" style="left:1252px;top:214px;font-size:12.3px;color:#000;letter-spacing:0">tree</div><svg style="position:absolute;left:1550px;top:215px;" width="16" height="16" viewBox="0 0 16 16"><path d="M1.5 4.5a1 1 0 0 1 1-1h3.3l1.6 1.6h6.1a1 1 0 0 1 1 1v7.4a1 1 0 0 1-1 1h-11a1 1 0 0 1-1-1z" fill="#EBECF0" stroke="#6C707E" stroke-linejoin="round"/><circle cx="5.5" cy="9.3" r="1.5" fill="none" stroke="#6C707E" stroke-width="1"/></svg><svg style="position:absolute;left:1218px;top:238px;" width="16" height="16" viewBox="0 0 16 16"><path d="M4.1 6.2l3.9 3.9 3.9-3.9" stroke="#818594" stroke-width="1.2" fill="none"/></svg><svg style="position:absolute;left:1234px;top:237px;" width="16" height="16" viewBox="0 0 16 16"><path d="M1.5 4.5a1 1 0 0 1 1-1h3.3l1.6 1.6h6.1a1 1 0 0 1 1 1v7.4a1 1 0 0 1-1 1h-11a1 1 0 0 1-1-1z" fill="#EBECF0" stroke="#6C707E" stroke-linejoin="round"/><circle cx="5.5" cy="9.3" r="1.5" fill="none" stroke="#6C707E" stroke-width="1"/></svg><div class="t" style="left:1252px;top:236px;font-size:12.3px;color:#000;letter-spacing:0">psi</div><svg style="position:absolute;left:1550px;top:237px;" width="16" height="16" viewBox="0 0 16 16"><path d="M1.5 4.5a1 1 0 0 1 1-1h3.3l1.6 1.6h6.1a1 1 0 0 1 1 1v7.4a1 1 0 0 1-1 1h-11a1 1 0 0 1-1-1z" fill="#EBECF0" stroke="#6C707E" stroke-linejoin="round"/><circle cx="5.5" cy="9.3" r="1.5" fill="none" stroke="#6C707E" stroke-width="1"/></svg><svg style="position:absolute;left:1234px;top:260px;" width="16" height="16" viewBox="0 0 16 16"><path d="M4.1 6.2l3.9 3.9 3.9-3.9" stroke="#818594" stroke-width="1.2" fill="none"/></svg><svg style="position:absolute;left:1250px;top:259px;" width="16" height="16" viewBox="0 0 16 16"><path d="M1.5 4.5a1 1 0 0 1 1-1h3.3l1.6 1.6h6.1a1 1 0 0 1 1 1v7.4a1 1 0 0 1-1 1h-11a1 1 0 0 1-1-1z" fill="#EBECF0" stroke="#6C707E" stroke-linejoin="round"/><circle cx="5.5" cy="9.3" r="1.5" fill="none" stroke="#6C707E" stroke-width="1"/></svg><div class="t" style="left:1268px;top:258px;font-size:12.3px;color:#000;letter-spacing:0">controller</div><svg style="position:absolute;left:1550px;top:259px;" width="16" height="16" viewBox="0 0 16 16"><path d="M1.5 4.5a1 1 0 0 1 1-1h3.3l1.6 1.6h6.1a1 1 0 0 1 1 1v7.4a1 1 0 0 1-1 1h-11a1 1 0 0 1-1-1z" fill="#EBECF0" stroke="#6C707E" stroke-linejoin="round"/><circle cx="5.5" cy="9.3" r="1.5" fill="none" stroke="#6C707E" stroke-width="1"/></svg><svg style="position:absolute;left:1250px;top:282px;" width="16" height="16" viewBox="0 0 16 16"><path d="M6.2 4.1l3.9 3.9-3.9 3.9" stroke="#818594" stroke-width="1.2" fill="none"/></svg><svg style="position:absolute;left:1266px;top:282px;" width="16" height="16" viewBox="0 0 16 16"><path d="M5.5 1.5h6a1 1 0 0 1 1 1v11a1 1 0 0 1-1 1h-7a1 1 0 0 1-1-1v-9.5z" fill="#EBECF0" stroke="#6C707E" stroke-linejoin="round"/><path d="M3.5 4.5h2v-2" fill="none" stroke="#6C707E"/></svg><div class="t" style="left:1284px;top:280px;font-size:12.3px;color:#000;letter-spacing:0">PsiController.java</div><svg style="position:absolute;left:1550px;top:283px;" width="16" height="16" viewBox="0 0 16 16"><path d="M5.5 1.5h6a1 1 0 0 1 1 1v11a1 1 0 0 1-1 1h-7a1 1 0 0 1-1-1v-9.5z" fill="#EBECF0" stroke="#6C707E" stroke-linejoin="round"/><path d="M3.5 4.5h2v-2" fill="none" stroke="#6C707E"/></svg><svg style="position:absolute;left:1250px;top:304px;" width="16" height="16" viewBox="0 0 16 16"><path d="M6.2 4.1l3.9 3.9-3.9 3.9" stroke="#818594" stroke-width="1.2" fill="none"/></svg><svg style="position:absolute;left:1266px;top:304px;" width="16" height="16" viewBox="0 0 16 16"><path d="M5.5 1.5h6a1 1 0 0 1 1 1v11a1 1 0 0 1-1 1h-7a1 1 0 0 1-1-1v-9.5z" fill="#EBECF0" stroke="#6C707E" stroke-linejoin="round"/><path d="M3.5 4.5h2v-2" fill="none" stroke="#6C707E"/></svg><div class="t" style="left:1284px;top:302px;font-size:12.3px;color:#000;letter-spacing:0">ParserModelBuilder.java</div><svg style="position:absolute;left:1550px;top:305px;" width="16" height="16" viewBox="0 0 16 16"><path d="M5.5 1.5h6a1 1 0 0 1 1 1v11a1 1 0 0 1-1 1h-7a1 1 0 0 1-1-1v-9.5z" fill="#EBECF0" stroke="#6C707E" stroke-linejoin="round"/><path d="M3.5 4.5h2v-2" fill="none" stroke="#6C707E"/></svg><svg style="position:absolute;left:1250px;top:326px;" width="16" height="16" viewBox="0 0 16 16"><path d="M6.2 4.1l3.9 3.9-3.9 3.9" stroke="#818594" stroke-width="1.2" fill="none"/></svg><svg style="position:absolute;left:1266px;top:326px;" width="16" height="16" viewBox="0 0 16 16"><path d="M5.5 1.5h6a1 1 0 0 1 1 1v11a1 1 0 0 1-1 1h-7a1 1 0 0 1-1-1v-9.5z" fill="#EBECF0" stroke="#6C707E" stroke-linejoin="round"/><path d="M3.5 4.5h2v-2" fill="none" stroke="#6C707E"/></svg><div class="t" style="left:1284px;top:324px;font-size:12.3px;color:#000;letter-spacing:0">ExternalModelBuilder.java</div><svg style="position:absolute;left:1550px;top:327px;" width="16" height="16" viewBox="0 0 16 16"><path d="M5.5 1.5h6a1 1 0 0 1 1 1v11a1 1 0 0 1-1 1h-7a1 1 0 0 1-1-1v-9.5z" fill="#EBECF0" stroke="#6C707E" stroke-linejoin="round"/><path d="M3.5 4.5h2v-2" fill="none" stroke="#6C707E"/></svg><svg style="position:absolute;left:1250px;top:348px;" width="16" height="16" viewBox="0 0 16 16"><path d="M6.2 4.1l3.9 3.9-3.9 3.9" stroke="#818594" stroke-width="1.2" fill="none"/></svg><svg style="position:absolute;left:1266px;top:348px;" width="16" height="16" viewBox="0 0 16 16"><path d="M5.5 1.5h6a1 1 0 0 1 1 1v11a1 1 0 0 1-1 1h-7a1 1 0 0 1-1-1v-9.5z" fill="#EBECF0" stroke="#6C707E" stroke-linejoin="round"/><path d="M3.5 4.5h2v-2" fill="none" stroke="#6C707E"/></svg><div class="t" style="left:1284px;top:346px;font-size:12.3px;color:#000;letter-spacing:0">ModelObjectCreator.java</div><svg style="position:absolute;left:1550px;top:349px;" width="16" height="16" viewBox="0 0 16 16"><path d="M5.5 1.5h6a1 1 0 0 1 1 1v11a1 1 0 0 1-1 1h-7a1 1 0 0 1-1-1v-9.5z" fill="#EBECF0" stroke="#6C707E" stroke-linejoin="round"/><path d="M3.5 4.5h2v-2" fill="none" stroke="#6C707E"/></svg><svg style="position:absolute;left:1250px;top:370px;" width="16" height="16" viewBox="0 0 16 16"><path d="M6.2 4.1l3.9 3.9-3.9 3.9" stroke="#818594" stroke-width="1.2" fill="none"/></svg><svg style="position:absolute;left:1266px;top:369px;" width="16" height="16" viewBox="0 0 16 16"><path d="M1.5 4.5a1 1 0 0 1 1-1h3.3l1.6 1.6h6.1a1 1 0 0 1 1 1v7.4a1 1 0 0 1-1 1h-11a1 1 0 0 1-1-1z" fill="#EBECF0" stroke="#6C707E" stroke-linejoin="round"/><circle cx="5.5" cy="9.3" r="1.5" fill="none" stroke="#6C707E" stroke-width="1"/></svg><div class="t" style="left:1284px;top:368px;font-size:12.3px;color:#000;letter-spacing:0">kotlin</div><svg style="position:absolute;left:1550px;top:369px;" width="16" height="16" viewBox="0 0 16 16"><path d="M1.5 4.5a1 1 0 0 1 1-1h3.3l1.6 1.6h6.1a1 1 0 0 1 1 1v7.4a1 1 0 0 1-1 1h-11a1 1 0 0 1-1-1z" fill="#EBECF0" stroke="#6C707E" stroke-linejoin="round"/><circle cx="5.5" cy="9.3" r="1.5" fill="#3C9F4A" stroke="#3C9F4A" stroke-width="1"/></svg><svg style="position:absolute;left:1250px;top:392px;" width="16" height="16" viewBox="0 0 16 16"><path d="M6.2 4.1l3.9 3.9-3.9 3.9" stroke="#818594" stroke-width="1.2" fill="none"/></svg><svg style="position:absolute;left:1266px;top:392px;" width="16" height="16" viewBox="0 0 16 16"><path d="M5.5 1.5h6a1 1 0 0 1 1 1v11a1 1 0 0 1-1 1h-7a1 1 0 0 1-1-1v-9.5z" fill="#EBECF0" stroke="#6C707E" stroke-linejoin="round"/><path d="M3.5 4.5h2v-2" fill="none" stroke="#6C707E"/></svg><div class="t" style="left:1284px;top:390px;font-size:12.3px;color:#000;letter-spacing:0">SmartReadAction.java</div><svg style="position:absolute;left:1550px;top:393px;" width="16" height="16" viewBox="0 0 16 16"><path d="M5.5 1.5h6a1 1 0 0 1 1 1v11a1 1 0 0 1-1 1h-7a1 1 0 0 1-1-1v-9.5z" fill="#EBECF0" stroke="#6C707E" stroke-linejoin="round"/><path d="M3.5 4.5h2v-2" fill="none" stroke="#6C707E"/></svg><svg style="position:absolute;left:1250px;top:414px;" width="16" height="16" viewBox="0 0 16 16"><path d="M6.2 4.1l3.9 3.9-3.9 3.9" stroke="#818594" stroke-width="1.2" fill="none"/></svg><svg style="position:absolute;left:1266px;top:413px;" width="16" height="16" viewBox="0 0 16 16"><path d="M1.5 4.5a1 1 0 0 1 1-1h3.3l1.6 1.6h6.1a1 1 0 0 1 1 1v7.4a1 1 0 0 1-1 1h-11a1 1 0 0 1-1-1z" fill="#EBECF0" stroke="#6C707E" stroke-linejoin="round"/><circle cx="5.5" cy="9.3" r="1.5" fill="none" stroke="#6C707E" stroke-width="1"/></svg><div class="t" style="left:1284px;top:412px;font-size:12.3px;color:#000;letter-spacing:0">base</div><svg style="position:absolute;left:1550px;top:413px;" width="16" height="16" viewBox="0 0 16 16"><path d="M1.5 4.5a1 1 0 0 1 1-1h3.3l1.6 1.6h6.1a1 1 0 0 1 1 1v7.4a1 1 0 0 1-1 1h-11a1 1 0 0 1-1-1z" fill="#EBECF0" stroke="#6C707E" stroke-linejoin="round"/><circle cx="5.5" cy="9.3" r="1.5" fill="#3C9F4A" stroke="#3C9F4A" stroke-width="1"/></svg><svg style="position:absolute;left:1234px;top:436px;" width="16" height="16" viewBox="0 0 16 16"><path d="M6.2 4.1l3.9 3.9-3.9 3.9" stroke="#818594" stroke-width="1.2" fill="none"/></svg><svg style="position:absolute;left:1250px;top:435px;" width="16" height="16" viewBox="0 0 16 16"><path d="M1.5 4.5a1 1 0 0 1 1-1h3.3l1.6 1.6h6.1a1 1 0 0 1 1 1v7.4a1 1 0 0 1-1 1h-11a1 1 0 0 1-1-1z" fill="#EBECF0" stroke="#6C707E" stroke-linejoin="round"/><circle cx="5.5" cy="9.3" r="1.5" fill="none" stroke="#6C707E" stroke-width="1"/></svg><div class="t" style="left:1268px;top:434px;font-size:12.3px;color:#000;letter-spacing:0">model</div><svg style="position:absolute;left:1550px;top:435px;" width="16" height="16" viewBox="0 0 16 16"><path d="M1.5 4.5a1 1 0 0 1 1-1h3.3l1.6 1.6h6.1a1 1 0 0 1 1 1v7.4a1 1 0 0 1-1 1h-11a1 1 0 0 1-1-1z" fill="#EBECF0" stroke="#6C707E" stroke-linejoin="round"/><circle cx="5.5" cy="9.3" r="1.5" fill="none" stroke="#6C707E" stroke-width="1"/></svg><svg style="position:absolute;left:1218px;top:458px;" width="16" height="16" viewBox="0 0 16 16"><path d="M6.2 4.1l3.9 3.9-3.9 3.9" stroke="#818594" stroke-width="1.2" fill="none"/></svg><svg style="position:absolute;left:1234px;top:457px;" width="16" height="16" viewBox="0 0 16 16"><path d="M1.5 4.5a1 1 0 0 1 1-1h3.3l1.6 1.6h6.1a1 1 0 0 1 1 1v7.4a1 1 0 0 1-1 1h-11a1 1 0 0 1-1-1z" fill="#EBECF0" stroke="#6C707E" stroke-linejoin="round"/><circle cx="5.5" cy="9.3" r="1.5" fill="none" stroke="#6C707E" stroke-width="1"/></svg><div class="t" style="left:1252px;top:456px;font-size:12.3px;color:#000;letter-spacing:0">core</div><svg style="position:absolute;left:1550px;top:457px;" width="16" height="16" viewBox="0 0 16 16"><path d="M1.5 4.5a1 1 0 0 1 1-1h3.3l1.6 1.6h6.1a1 1 0 0 1 1 1v7.4a1 1 0 0 1-1 1h-11a1 1 0 0 1-1-1z" fill="#EBECF0" stroke="#6C707E" stroke-linejoin="round"/><circle cx="5.5" cy="9.3" r="1.5" fill="none" stroke="#6C707E" stroke-width="1"/></svg><svg style="position:absolute;left:1218px;top:480px;" width="16" height="16" viewBox="0 0 16 16"><path d="M6.2 4.1l3.9 3.9-3.9 3.9" stroke="#818594" stroke-width="1.2" fill="none"/></svg><svg style="position:absolute;left:1234px;top:479px;" width="16" height="16" viewBox="0 0 16 16"><path d="M1.5 4.5a1 1 0 0 1 1-1h3.3l1.6 1.6h6.1a1 1 0 0 1 1 1v7.4a1 1 0 0 1-1 1h-11a1 1 0 0 1-1-1z" fill="#EBECF0" stroke="#6C707E" stroke-linejoin="round"/><circle cx="5.5" cy="9.3" r="1.5" fill="none" stroke="#6C707E" stroke-width="1"/></svg><div class="t" style="left:1252px;top:478px;font-size:12.3px;color:#000;letter-spacing:0">common</div><svg style="position:absolute;left:1550px;top:479px;" width="16" height="16" viewBox="0 0 16 16"><path d="M1.5 4.5a1 1 0 0 1 1-1h3.3l1.6 1.6h6.1a1 1 0 0 1 1 1v7.4a1 1 0 0 1-1 1h-11a1 1 0 0 1-1-1z" fill="#EBECF0" stroke="#6C707E" stroke-linejoin="round"/><circle cx="5.5" cy="9.3" r="1.5" fill="none" stroke="#6C707E" stroke-width="1"/></svg><svg style="position:absolute;left:1202px;top:502px;" width="16" height="16" viewBox="0 0 16 16"><path d="M6.2 4.1l3.9 3.9-3.9 3.9" stroke="#818594" stroke-width="1.2" fill="none"/></svg><svg style="position:absolute;left:1218px;top:501px;" width="16" height="16" viewBox="0 0 16 16"><path d="M1.5 4.5a1 1 0 0 1 1-1h3.3l1.6 1.6h6.1a1 1 0 0 1 1 1v7.4a1 1 0 0 1-1 1h-11a1 1 0 0 1-1-1z" fill="#EBECF0" stroke="#6C707E" stroke-linejoin="round"/><circle cx="5.5" cy="9.3" r="1.5" fill="none" stroke="#6C707E" stroke-width="1"/></svg><div class="t" style="left:1236px;top:500px;font-size:12.3px;color:#000;letter-spacing:0">icons</div><svg style="position:absolute;left:1550px;top:501px;" width="16" height="16" viewBox="0 0 16 16"><path d="M1.5 4.5a1 1 0 0 1 1-1h3.3l1.6 1.6h6.1a1 1 0 0 1 1 1v7.4a1 1 0 0 1-1 1h-11a1 1 0 0 1-1-1z" fill="#EBECF0" stroke="#6C707E" stroke-linejoin="round"/><circle cx="5.5" cy="9.3" r="1.5" fill="none" stroke="#6C707E" stroke-width="1"/></svg><svg style="position:absolute;left:1170px;top:524px;" width="16" height="16" viewBox="0 0 16 16"><path d="M6.2 4.1l3.9 3.9-3.9 3.9" stroke="#818594" stroke-width="1.2" fill="none"/></svg><svg style="position:absolute;left:1186px;top:523px;" width="18" height="18" viewBox="0 0 18 18"><path d="M1.5 4.5a1 1 0 0 1 1-1h3.3l1.6 1.6h6.1a1 1 0 0 1 1 1v7.4a1 1 0 0 1-1 1h-11a1 1 0 0 1-1-1z" fill="#EBECF0" stroke="#6C707E" stroke-linejoin="round"/><rect x="8.5" y="10" width="7.5" height="8" rx="2" fill="#3A3434" stroke="#3574F0" stroke-width="1"/><path d="M10.5 12.7h3.5M10.5 15.5h3.5" stroke="#fff" stroke-width="1.2"/></svg><div class="t" style="left:1204px;top:522px;font-size:12.3px;color:#000;letter-spacing:0">External</div><svg style="position:absolute;left:1550px;top:523px;" width="18" height="18" viewBox="0 0 18 18"><path d="M1.5 4.5a1 1 0 0 1 1-1h3.3l1.6 1.6h6.1a1 1 0 0 1 1 1v7.4a1 1 0 0 1-1 1h-11a1 1 0 0 1-1-1z" fill="#EBECF0" stroke="#6C707E" stroke-linejoin="round"/><rect x="8.5" y="10" width="7.5" height="8" rx="2" fill="#3A3434" stroke="#3574F0" stroke-width="1"/><path d="M10.5 12.7h3.5M10.5 15.5h3.5" stroke="#fff" stroke-width="1.2"/></svg><svg style="position:absolute;left:0;top:0" width="1683" height="1031"><g fill="none" stroke="#9C9C9C" stroke-width="1"><path d="M1551 139 A118.0 132.0 0 0 0 1551 403"/><path d="M1551 139 A118.0 154.0 0 0 0 1551 447"/><path d="M1551 139 A118.0 165.0 0 0 0 1551 469"/><path d="M1551 139 A118.0 176.0 0 0 0 1551 491"/><path d="M1551 139 A118.0 187.0 0 0 0 1551 513"/><path d="M1551 139 A118.0 198.0 0 0 0 1551 535"/><path d="M1551 139 A102.0 110.0 0 0 0 1551 359"/><path d="M1551 205 A3.5 11.0 0 0 0 1551 227"/><path d="M1551 205 A36.0 44.0 0 0 0 1551 293"/><path d="M1551 205 A47.0 55.0 0 0 0 1551 315"/><path d="M1551 205 A113.0 121.0 0 0 0 1551 447"/><path d="M1551 205 A118.0 132.0 0 0 0 1551 469"/><path d="M1551 205 A118.0 143.0 0 0 0 1551 491"/><path d="M1551 205 A118.0 165.0 0 0 0 1551 535"/><path d="M1551 205 A69.0 77.0 0 0 0 1551 359"/><path d="M1551 205 A118.0 154.0 0 0 0 1551 513"/><path d="M1551 227 A25.0 33.0 0 0 0 1551 293"/><path d="M1551 227 A36.0 44.0 0 0 0 1551 315"/><path d="M1551 227 A102.0 110.0 0 0 0 1551 447"/><path d="M1551 227 A113.0 121.0 0 0 0 1551 469"/><path d="M1551 227 A118.0 132.0 0 0 0 1551 491"/><path d="M1551 227 A118.0 154.0 0 0 0 1551 535"/><path d="M1551 227 A118.0 143.0 0 0 0 1551 513"/><path d="M1551 293 A3.5 11.0 0 0 0 1551 315"/><path d="M1551 293 A14.0 22.0 0 0 0 1551 337"/><path d="M1551 293 A25.0 33.0 0 0 0 1551 359"/><path d="M1551 293 A36.0 44.0 0 0 0 1551 381"/><path d="M1551 293 A58.0 66.0 0 0 0 1551 425"/><path d="M1551 293 A69.0 77.0 0 0 0 1551 447"/><path d="M1551 293 A80.0 88.0 0 0 0 1551 469"/><path d="M1551 293 A91.0 99.0 0 0 0 1551 491"/><path d="M1551 293 A113.0 121.0 0 0 0 1551 535"/><path d="M1551 293 A47.0 55.0 0 0 0 1551 403"/><path d="M1551 315 A3.5 11.0 0 0 0 1551 337"/><path d="M1551 315 A14.0 22.0 0 0 0 1551 359"/><path d="M1551 315 A25.0 33.0 0 0 0 1551 381"/><path d="M1551 315 A36.0 44.0 0 0 0 1551 403"/><path d="M1551 315 A47.0 55.0 0 0 0 1551 425"/><path d="M1551 315 A58.0 66.0 0 0 0 1551 447"/><path d="M1551 315 A69.0 77.0 0 0 0 1551 469"/><path d="M1551 315 A80.0 88.0 0 0 0 1551 491"/><path d="M1551 315 A102.0 110.0 0 0 0 1551 535"/><path d="M1551 337 A3.5 11.0 0 0 0 1551 359"/><path d="M1551 337 A14.0 22.0 0 0 0 1551 381"/><path d="M1551 337 A25.0 33.0 0 0 0 1551 403"/><path d="M1551 337 A36.0 44.0 0 0 0 1551 425"/><path d="M1551 337 A47.0 55.0 0 0 0 1551 447"/><path d="M1551 337 A58.0 66.0 0 0 0 1551 469"/><path d="M1551 337 A69.0 77.0 0 0 0 1551 491"/><path d="M1551 337 A91.0 99.0 0 0 0 1551 535"/><path d="M1551 337 A80.0 88.0 0 0 0 1551 513"/><path d="M1551 359 A3.5 11.0 0 0 0 1551 381"/><path d="M1551 359 A25.0 33.0 0 0 0 1551 425"/><path d="M1551 359 A36.0 44.0 0 0 0 1551 447"/><path d="M1551 359 A47.0 55.0 0 0 0 1551 469"/><path d="M1551 359 A58.0 66.0 0 0 0 1551 491"/><path d="M1551 359 A80.0 88.0 0 0 0 1551 535"/><path d="M1551 381 A3.5 11.0 0 0 0 1551 403"/><path d="M1551 381 A25.0 33.0 0 0 0 1551 447"/><path d="M1551 381 A36.0 44.0 0 0 0 1551 469"/><path d="M1551 381 A47.0 55.0 0 0 0 1551 491"/><path d="M1551 381 A69.0 77.0 0 0 0 1551 535"/><path d="M1551 403 A3.5 11.0 0 0 0 1551 425"/><path d="M1551 403 A14.0 22.0 0 0 0 1551 447"/><path d="M1551 403 A25.0 33.0 0 0 0 1551 469"/><path d="M1551 403 A36.0 44.0 0 0 0 1551 491"/><path d="M1551 403 A58.0 66.0 0 0 0 1551 535"/><path d="M1551 425 A3.5 11.0 0 0 0 1551 447"/><path d="M1551 425 A14.0 22.0 0 0 0 1551 469"/><path d="M1551 425 A25.0 33.0 0 0 0 1551 491"/><path d="M1551 425 A47.0 55.0 0 0 0 1551 535"/><path d="M1551 447 A3.5 11.0 0 0 0 1551 469"/><path d="M1551 447 A14.0 22.0 0 0 0 1551 491"/><path d="M1551 447 A36.0 44.0 0 0 0 1551 535"/><path d="M1551 447 A25.0 33.0 0 0 0 1551 513"/><path d="M1551 469 A3.5 11.0 0 0 0 1551 491"/><path d="M1551 469 A25.0 33.0 0 0 0 1551 535"/><path d="M1551 491 A14.0 22.0 0 0 0 1551 535"/><path d="M1551 491 A3.5 11.0 0 0 0 1551 513"/><path d="M1551 513 A3.5 11.0 0 0 0 1551 535"/></g><path d="M1565 139 A74 121.0 0 0 1 1565 381" fill="none" stroke="#9C9C9C" stroke-width="1"/><path d="M1551 381 A15 22.0 0 0 0 1551 425" fill="none" stroke="#4DA825" stroke-width="2.2"/></svg><div style="left:1642px;top:36px;width:1px;height:689px;background:#EBECF0"></div><div style="left:1643px;top:36px;width:40px;height:970px;background:#F7F8FA"></div><svg style="position:absolute;left:1653px;top:46px;" width="20" height="20" viewBox="0 0 20 20"><path d="M10 2.5c-3.3 0-5.5 2.5-5.5 5.5v4.5L3 15h14l-1.5-2.5V8c0-3-2.2-5.5-5.5-5.5z" fill="none" stroke="#6C707E" stroke-width="1.4" stroke-linejoin="round"/><path d="M8.5 17.5h3" stroke="#6C707E" stroke-width="1.4"/></svg><svg style="position:absolute;left:1653px;top:87px;" width="20" height="20" viewBox="0 0 20 20"><path d="M4 12c-2-4 1-9 6-9 3 0 5 1.5 6 3.5M6.5 12c-1.5-2.5.5-6 3.5-6 1.5 0 2.5.6 3.2 1.5M9 11.5c-.5-1 .2-2.5 1.3-2.5" fill="none" stroke="#6C707E" stroke-width="1.4" stroke-linecap="round"/><path d="M11 10.5h8v6h-3l-2 2v-2h-3z" fill="#F7F8FA" stroke="#6C707E" stroke-width="1.4" stroke-linejoin="round"/></svg><svg style="position:absolute;left:1653px;top:128px;" width="22" height="18" viewBox="0 0 22 18"><path d="M1.8 14.2C1.2 8.8 4.6 4.6 9.2 4.6c2.6 0 4.6.8 6 2 1.2-1 1.6-2.6 2.2-3.8.5-1 1.8-.7 1.5.5" fill="none" stroke="#6C707E" stroke-width="1.5" stroke-linecap="round"/><path d="M15.2 6.6c.8 1.8.4 3.8-.8 5v2.6h-2.3l-.5-2c-1.6.5-3.4.5-5 0l-.5 2H3.8l-.3-1.5" fill="none" stroke="#6C707E" stroke-width="1.5" stroke-linejoin="round"/><circle cx="12.8" cy="7.4" r=".7" fill="#6C707E"/></svg><div style="left:1648px;top:162px;width:31px;height:30px;border-radius:6px;background:#DFE1E5"></div><svg style="position:absolute;left:1654px;top:168px;" width="20" height="20" viewBox="0 0 20 20"><g transform="scale(1.2)"><path d="M6.5 3.2A5 5 0 0 0 4.2 12.2" fill="none" stroke="#2F8A35" stroke-width="2.3"/><path d="M0.8 14.8h6v-4.5z" fill="#4CAF50"/><path d="M9.5 12.8A5 5 0 0 0 11.8 3.8" fill="none" stroke="#D9303A" stroke-width="2.3"/><path d="M15.2 1.2h-6v4.5z" fill="#E55B5B"/><rect x="6.3" y="1" width="3.6" height="3.6" fill="#333"/><rect x="6.3" y="11.2" width="3.6" height="3.6" fill="#333"/></g></svg><div style="left:39px;top:724px;width:1604px;height:1px;background:#EBECF0"></div><div style="left:39px;top:725px;width:1604px;height:280px;background:#F7F8FA"></div><div class="t" style="left:51px;top:736px;font-weight:bold;font-size:13.3px">ArcTree Dependencies</div><div style="left:39px;top:765px;width:1604px;height:1px;background:#EBECF0"></div><div class="t" style="left:48px;top:770px;font-size:13.6px">Type [21]</div><svg style="position:absolute;left:112px;top:772px;" width="12" height="12" viewBox="0 0 12 12"><path d="M3 8l3-3 3 3" fill="none" stroke="#6C707E" stroke-width="1.1"/></svg><div style="left:168px;top:768px;width:1px;height:22px;background:#EBECF0"></div><div style="left:425px;top:768px;width:1px;height:22px;background:#EBECF0"></div><div style="left:598px;top:768px;width:1px;height:22px;background:#EBECF0"></div><div style="left:856px;top:768px;width:1px;height:22px;background:#EBECF0"></div><div style="left:1113px;top:768px;width:1px;height:22px;background:#EBECF0"></div><div style="left:1371px;top:768px;width:1px;height:22px;background:#EBECF0"></div><div class="t" style="left:176px;top:770px;">From File</div><div class="t" style="left:480px;top:770px;width:110px;text-align:right">Offset</div><div class="t" style="left:606px;top:770px;">From</div><div class="t" style="left:864px;top:770px;">Info</div><div class="t" style="left:1121px;top:770px;">To</div><div class="t" style="left:1379px;top:770px;">To File</div><div style="left:40px;top:792px;width:1588px;height:21px;background:#D0DEFC"></div><div class="t" style="left:43px;top:792.5px;">Internal</div><svg style="position:absolute;left:173px;top:793.5px;" width="12" height="16" viewBox="0 0 12 16"><path d="M4.5 2.5h5a1 1 0 0 1 1 1v10a1 1 0 0 1-1 1h-7a1 1 0 0 1-1-1v-8z" fill="none" stroke="#6C707E" stroke-width="1"/><path d="M1.5 5.5h3v-3" fill="none" stroke="#6C707E" stroke-width="1"/></svg><div class="t" style="left:191px;top:792.5px;">KotlinObjectCreator.java</div><div class="t" style="left:480px;top:792.5px;width:115px;text-align:right">1699</div><svg style="position:absolute;left:601px;top:795.0px;" width="15" height="15" viewBox="0 0 15 15"><circle cx="7.5" cy="7.5" r="6.2" fill="#FDEBDB" stroke="#E2711D" stroke-width="1.3"/><text x="7.5" y="10.8" text-anchor="middle" font-family="Liberation Sans" font-size="9.5" fill="#E2711D" stroke="#E2711D" stroke-width="0.35">f</text></svg><div class="t" style="left:621px;top:792.5px;">m_dependencyResolutionQueue</div><div class="t" style="left:859px;top:792.5px;">Uses</div><svg style="position:absolute;left:1116px;top:795.0px;" width="15" height="15" viewBox="0 0 15 15"><circle cx="7.5" cy="7.5" r="6.2" fill="none" stroke="#4682FA" stroke-width="1.3"/><text x="7.5" y="10.8" text-anchor="middle" font-family="Liberation Sans" font-size="9.5" fill="#4682FA" stroke="#4682FA" stroke-width="0.35">R</text></svg><div class="t" style="left:1136px;top:792.5px;">DependencyResolutionItem</div><svg style="position:absolute;left:1376px;top:793.5px;" width="12" height="16" viewBox="0 0 12 16"><path d="M4.5 2.5h5a1 1 0 0 1 1 1v10a1 1 0 0 1-1 1h-7a1 1 0 0 1-1-1v-8z" fill="none" stroke="#6C707E" stroke-width="1"/><path d="M1.5 5.5h3v-3" fill="none" stroke="#6C707E" stroke-width="1"/></svg><div class="t" style="left:1394px;top:792.5px;">DependencyResolutionItem.java</div><div class="t" style="left:43px;top:813.5px;">Internal</div><svg style="position:absolute;left:173px;top:814.5px;" width="12" height="16" viewBox="0 0 12 16"><path d="M4.5 2.5h5a1 1 0 0 1 1 1v10a1 1 0 0 1-1 1h-7a1 1 0 0 1-1-1v-8z" fill="none" stroke="#6C707E" stroke-width="1"/><path d="M1.5 5.5h3v-3" fill="none" stroke="#6C707E" stroke-width="1"/></svg><div class="t" style="left:191px;top:813.5px;">KotlinExternalModelBuilder.java</div><div class="t" style="left:480px;top:813.5px;width:115px;text-align:right">2963</div><svg style="position:absolute;left:601px;top:816.0px;" width="15" height="15" viewBox="0 0 15 15"><circle cx="7.5" cy="7.5" r="6.2" fill="none" stroke="#D9434E" stroke-width="1.3"/><text x="7.5" y="10.8" text-anchor="middle" font-family="Liberation Sans" font-size="10" fill="#D9434E" stroke="#D9434E" stroke-width="0.35">m</text></svg><div class="t" style="left:621px;top:813.5px;">getExternalClassFile(org.jetbrains....</div><div class="t" style="left:859px;top:813.5px;">Call</div><svg style="position:absolute;left:1116px;top:816.0px;" width="15" height="15" viewBox="0 0 15 15"><circle cx="7.5" cy="7.5" r="6.2" fill="none" stroke="#D9434E" stroke-width="1.3"/><text x="7.5" y="10.8" text-anchor="middle" font-family="Liberation Sans" font-size="10" fill="#D9434E" stroke="#D9434E" stroke-width="0.35">m</text></svg><div class="t" style="left:1136px;top:813.5px;">getParentForFile(com.intellij.psi.Psi...</div><svg style="position:absolute;left:1376px;top:814.5px;" width="12" height="16" viewBox="0 0 12 16"><path d="M4.5 2.5h5a1 1 0 0 1 1 1v10a1 1 0 0 1-1 1h-7a1 1 0 0 1-1-1v-8z" fill="none" stroke="#6C707E" stroke-width="1"/><path d="M1.5 5.5h3v-3" fill="none" stroke="#6C707E" stroke-width="1"/></svg><div class="t" style="left:1394px;top:813.5px;">IExternalModelBuilder.java</div><div class="t" style="left:43px;top:834.5px;">Internal</div><svg style="position:absolute;left:173px;top:835.5px;" width="12" height="16" viewBox="0 0 12 16"><path d="M4.5 2.5h5a1 1 0 0 1 1 1v10a1 1 0 0 1-1 1h-7a1 1 0 0 1-1-1v-8z" fill="none" stroke="#6C707E" stroke-width="1"/><path d="M1.5 5.5h3v-3" fill="none" stroke="#6C707E" stroke-width="1"/></svg><div class="t" style="left:191px;top:834.5px;">KotlinObjectCreator.java</div><div class="t" style="left:480px;top:834.5px;width:115px;text-align:right">2516</div><svg style="position:absolute;left:601px;top:837.0px;" width="15" height="15" viewBox="0 0 15 15"><circle cx="7.5" cy="7.5" r="6.2" fill="none" stroke="#D9434E" stroke-width="1.3"/><text x="7.5" y="10.8" text-anchor="middle" font-family="Liberation Sans" font-size="10" fill="#D9434E" stroke="#D9434E" stroke-width="0.35">m</text></svg><div class="t" style="left:621px;top:834.5px;">getDependencyResolutionQueue()</div><div class="t" style="left:859px;top:834.5px;">Uses</div><svg style="position:absolute;left:1116px;top:837.0px;" width="15" height="15" viewBox="0 0 15 15"><circle cx="7.5" cy="7.5" r="6.2" fill="none" stroke="#4682FA" stroke-width="1.3"/><text x="7.5" y="10.8" text-anchor="middle" font-family="Liberation Sans" font-size="9.5" fill="#4682FA" stroke="#4682FA" stroke-width="0.35">R</text></svg><div class="t" style="left:1136px;top:834.5px;">DependencyResolutionItem</div><svg style="position:absolute;left:1376px;top:835.5px;" width="12" height="16" viewBox="0 0 12 16"><path d="M4.5 2.5h5a1 1 0 0 1 1 1v10a1 1 0 0 1-1 1h-7a1 1 0 0 1-1-1v-8z" fill="none" stroke="#6C707E" stroke-width="1"/><path d="M1.5 5.5h3v-3" fill="none" stroke="#6C707E" stroke-width="1"/></svg><div class="t" style="left:1394px;top:834.5px;">DependencyResolutionItem.java</div><div class="t" style="left:43px;top:855.5px;">Internal</div><svg style="position:absolute;left:173px;top:856.5px;" width="12" height="16" viewBox="0 0 12 16"><path d="M4.5 2.5h5a1 1 0 0 1 1 1v10a1 1 0 0 1-1 1h-7a1 1 0 0 1-1-1v-8z" fill="none" stroke="#6C707E" stroke-width="1"/><path d="M1.5 5.5h3v-3" fill="none" stroke="#6C707E" stroke-width="1"/></svg><div class="t" style="left:191px;top:855.5px;">KotlinScanner.java</div><div class="t" style="left:480px;top:855.5px;width:115px;text-align:right">3111</div><svg style="position:absolute;left:601px;top:858.0px;" width="15" height="15" viewBox="0 0 15 15"><circle cx="7.5" cy="7.5" r="6.2" fill="none" stroke="#D9434E" stroke-width="1.3"/><text x="7.5" y="10.8" text-anchor="middle" font-family="Liberation Sans" font-size="10" fill="#D9434E" stroke="#D9434E" stroke-width="0.35">m</text></svg><div class="t" style="left:621px;top:855.5px;">processKotlinDependencies(com.in...</div><div class="t" style="left:859px;top:855.5px;">Call</div><svg style="position:absolute;left:1116px;top:858.0px;" width="15" height="15" viewBox="0 0 15 15"><circle cx="7.5" cy="7.5" r="6.2" fill="none" stroke="#D9434E" stroke-width="1.3"/><text x="7.5" y="10.8" text-anchor="middle" font-family="Liberation Sans" font-size="10" fill="#D9434E" stroke="#D9434E" stroke-width="0.35">m</text></svg><div class="t" style="left:1136px;top:855.5px;">parserElement()</div><svg style="position:absolute;left:1376px;top:856.5px;" width="12" height="16" viewBox="0 0 12 16"><path d="M4.5 2.5h5a1 1 0 0 1 1 1v10a1 1 0 0 1-1 1h-7a1 1 0 0 1-1-1v-8z" fill="none" stroke="#6C707E" stroke-width="1"/><path d="M1.5 5.5h3v-3" fill="none" stroke="#6C707E" stroke-width="1"/></svg><div class="t" style="left:1394px;top:855.5px;">DependencyResolutionItem.java</div><div class="t" style="left:43px;top:876.5px;">Internal</div><svg style="position:absolute;left:173px;top:877.5px;" width="12" height="16" viewBox="0 0 12 16"><path d="M4.5 2.5h5a1 1 0 0 1 1 1v10a1 1 0 0 1-1 1h-7a1 1 0 0 1-1-1v-8z" fill="none" stroke="#6C707E" stroke-width="1"/><path d="M1.5 5.5h3v-3" fill="none" stroke="#6C707E" stroke-width="1"/></svg><div class="t" style="left:191px;top:876.5px;">KotlinScanner.java</div><div class="t" style="left:480px;top:876.5px;width:115px;text-align:right">2842</div><svg style="position:absolute;left:601px;top:879.0px;" width="15" height="15" viewBox="0 0 15 15"><circle cx="7.5" cy="7.5" r="6.2" fill="none" stroke="#D9434E" stroke-width="1.3"/><text x="7.5" y="10.8" text-anchor="middle" font-family="Liberation Sans" font-size="10" fill="#D9434E" stroke="#D9434E" stroke-width="0.35">m</text></svg><div class="t" style="left:621px;top:876.5px;">processKotlinDependencies(com.in...</div><div class="t" style="left:859px;top:876.5px;">Call</div><svg style="position:absolute;left:1116px;top:879.0px;" width="15" height="15" viewBox="0 0 15 15"><circle cx="7.5" cy="7.5" r="6.2" fill="none" stroke="#D9434E" stroke-width="1.3"/><text x="7.5" y="10.8" text-anchor="middle" font-family="Liberation Sans" font-size="10" fill="#D9434E" stroke="#D9434E" stroke-width="0.35">m</text></svg><div class="t" style="left:1136px;top:876.5px;">psiElementPtr()</div><svg style="position:absolute;left:1376px;top:877.5px;" width="12" height="16" viewBox="0 0 12 16"><path d="M4.5 2.5h5a1 1 0 0 1 1 1v10a1 1 0 0 1-1 1h-7a1 1 0 0 1-1-1v-8z" fill="none" stroke="#6C707E" stroke-width="1"/><path d="M1.5 5.5h3v-3" fill="none" stroke="#6C707E" stroke-width="1"/></svg><div class="t" style="left:1394px;top:876.5px;">DependencyResolutionItem.java</div><div class="t" style="left:43px;top:897.5px;">Internal</div><svg style="position:absolute;left:173px;top:898.5px;" width="12" height="16" viewBox="0 0 12 16"><path d="M4.5 2.5h5a1 1 0 0 1 1 1v10a1 1 0 0 1-1 1h-7a1 1 0 0 1-1-1v-8z" fill="none" stroke="#6C707E" stroke-width="1"/><path d="M1.5 5.5h3v-3" fill="none" stroke="#6C707E" stroke-width="1"/></svg><div class="t" style="left:191px;top:897.5px;">KotlinExternalModelBuilder.java</div><div class="t" style="left:480px;top:897.5px;width:115px;text-align:right">2036</div><svg style="position:absolute;left:601px;top:900.0px;" width="15" height="15" viewBox="0 0 15 15"><circle cx="7.5" cy="7.5" r="6.2" fill="none" stroke="#D9434E" stroke-width="1.3"/><text x="7.5" y="10.8" text-anchor="middle" font-family="Liberation Sans" font-size="10" fill="#D9434E" stroke="#D9434E" stroke-width="0.35">m</text></svg><div class="t" style="left:621px;top:897.5px;">getExternalClassFile(org.jetbrains....</div><div class="t" style="left:859px;top:897.5px;">Call</div><svg style="position:absolute;left:1116px;top:900.0px;" width="15" height="15" viewBox="0 0 15 15"><circle cx="7.5" cy="7.5" r="6.2" fill="none" stroke="#D9434E" stroke-width="1.3"/><text x="7.5" y="10.8" text-anchor="middle" font-family="Liberation Sans" font-size="10" fill="#D9434E" stroke="#D9434E" stroke-width="0.35">m</text></svg><div class="t" style="left:1136px;top:897.5px;">isClosed()</div><svg style="position:absolute;left:1376px;top:898.5px;" width="12" height="16" viewBox="0 0 12 16"><path d="M4.5 2.5h5a1 1 0 0 1 1 1v10a1 1 0 0 1-1 1h-7a1 1 0 0 1-1-1v-8z" fill="none" stroke="#6C707E" stroke-width="1"/><path d="M1.5 5.5h3v-3" fill="none" stroke="#6C707E" stroke-width="1"/></svg><div class="t" style="left:1394px;top:897.5px;">IExternalModelBuilder.java</div><div class="t" style="left:43px;top:918.5px;">Internal</div><svg style="position:absolute;left:173px;top:919.5px;" width="12" height="16" viewBox="0 0 12 16"><path d="M4.5 2.5h5a1 1 0 0 1 1 1v10a1 1 0 0 1-1 1h-7a1 1 0 0 1-1-1v-8z" fill="none" stroke="#6C707E" stroke-width="1"/><path d="M1.5 5.5h3v-3" fill="none" stroke="#6C707E" stroke-width="1"/></svg><div class="t" style="left:191px;top:918.5px;">KotlinPsiHelper.java</div><div class="t" style="left:480px;top:918.5px;width:115px;text-align:right">1657</div><svg style="position:absolute;left:601px;top:921.0px;" width="15" height="15" viewBox="0 0 15 15"><circle cx="7.5" cy="7.5" r="6.2" fill="none" stroke="#D9434E" stroke-width="1.3"/><text x="7.5" y="10.8" text-anchor="middle" font-family="Liberation Sans" font-size="10" fill="#D9434E" stroke="#D9434E" stroke-width="0.35">m</text></svg><div class="t" style="left:621px;top:918.5px;">constructorKey(org.jetbrains.kotlin...</div><div class="t" style="left:859px;top:918.5px;">Call</div><svg style="position:absolute;left:1116px;top:921.0px;" width="15" height="15" viewBox="0 0 15 15"><circle cx="7.5" cy="7.5" r="6.2" fill="none" stroke="#D9434E" stroke-width="1.3"/><text x="7.5" y="10.8" text-anchor="middle" font-family="Liberation Sans" font-size="10" fill="#D9434E" stroke="#D9434E" stroke-width="0.35">m</text></svg><div class="t" style="left:1136px;top:918.5px;">moduleName(com.intellij.psi.PsiEle...</div><svg style="position:absolute;left:1376px;top:919.5px;" width="12" height="16" viewBox="0 0 12 16"><path d="M4.5 2.5h5a1 1 0 0 1 1 1v10a1 1 0 0 1-1 1h-7a1 1 0 0 1-1-1v-8z" fill="none" stroke="#6C707E" stroke-width="1"/><path d="M1.5 5.5h3v-3" fill="none" stroke="#6C707E" stroke-width="1"/></svg><div class="t" style="left:1394px;top:918.5px;">PsiHelper.java</div><div class="t" style="left:43px;top:939.5px;">Internal</div><svg style="position:absolute;left:173px;top:940.5px;" width="12" height="16" viewBox="0 0 12 16"><path d="M4.5 2.5h5a1 1 0 0 1 1 1v10a1 1 0 0 1-1 1h-7a1 1 0 0 1-1-1v-8z" fill="none" stroke="#6C707E" stroke-width="1"/><path d="M1.5 5.5h3v-3" fill="none" stroke="#6C707E" stroke-width="1"/></svg><div class="t" style="left:191px;top:939.5px;">KotlinObjectCreator.java</div><div class="t" style="left:480px;top:939.5px;width:115px;text-align:right">1699</div><svg style="position:absolute;left:601px;top:942.0px;" width="15" height="15" viewBox="0 0 15 15"><circle cx="7.5" cy="7.5" r="6.2" fill="#FDEBDB" stroke="#E2711D" stroke-width="1.3"/><text x="7.5" y="10.8" text-anchor="middle" font-family="Liberation Sans" font-size="9.5" fill="#E2711D" stroke="#E2711D" stroke-width="0.35">f</text></svg><div class="t" style="left:621px;top:939.5px;">m_dependencyResolutionQueue</div><div class="t" style="left:859px;top:939.5px;">Uses</div><svg style="position:absolute;left:1116px;top:942.0px;" width="15" height="15" viewBox="0 0 15 15"><circle cx="7.5" cy="7.5" r="6.2" fill="none" stroke="#4682FA" stroke-width="1.3"/><text x="7.5" y="10.8" text-anchor="middle" font-family="Liberation Sans" font-size="9.5" fill="#4682FA" stroke="#4682FA" stroke-width="0.35">R</text></svg><div class="t" style="left:1136px;top:939.5px;">DependencyResolutionItem</div><svg style="position:absolute;left:1376px;top:940.5px;" width="12" height="16" viewBox="0 0 12 16"><path d="M4.5 2.5h5a1 1 0 0 1 1 1v10a1 1 0 0 1-1 1h-7a1 1 0 0 1-1-1v-8z" fill="none" stroke="#6C707E" stroke-width="1"/><path d="M1.5 5.5h3v-3" fill="none" stroke="#6C707E" stroke-width="1"/></svg><div class="t" style="left:1394px;top:939.5px;">DependencyResolutionItem.java</div><div class="t" style="left:43px;top:960.5px;">Internal</div><svg style="position:absolute;left:173px;top:961.5px;" width="12" height="16" viewBox="0 0 12 16"><path d="M4.5 2.5h5a1 1 0 0 1 1 1v10a1 1 0 0 1-1 1h-7a1 1 0 0 1-1-1v-8z" fill="none" stroke="#6C707E" stroke-width="1"/><path d="M1.5 5.5h3v-3" fill="none" stroke="#6C707E" stroke-width="1"/></svg><div class="t" style="left:191px;top:960.5px;">KotlinObjectCreator.java</div><div class="t" style="left:480px;top:960.5px;width:115px;text-align:right">2279</div><svg style="position:absolute;left:601px;top:963.0px;" width="15" height="15" viewBox="0 0 15 15"><circle cx="7.5" cy="7.5" r="6.2" fill="none" stroke="#D9434E" stroke-width="1.3"/><text x="7.5" y="10.8" text-anchor="middle" font-family="Liberation Sans" font-size="10" fill="#D9434E" stroke="#D9434E" stroke-width="0.35">m</text></svg><div class="t" style="left:621px;top:960.5px;">addDependencyResolutionItem(co...</div><div class="t" style="left:859px;top:960.5px;">New</div><svg style="position:absolute;left:1116px;top:963.0px;" width="15" height="15" viewBox="0 0 15 15"><circle cx="7.5" cy="7.5" r="6.2" fill="none" stroke="#D9434E" stroke-width="1.3"/><text x="7.5" y="10.8" text-anchor="middle" font-family="Liberation Sans" font-size="10" fill="#D9434E" stroke="#D9434E" stroke-width="0.35">m</text></svg><div class="t" style="left:1136px;top:960.5px;">DependencyResolutionItem(com.in...</div><svg style="position:absolute;left:1376px;top:961.5px;" width="12" height="16" viewBox="0 0 12 16"><path d="M4.5 2.5h5a1 1 0 0 1 1 1v10a1 1 0 0 1-1 1h-7a1 1 0 0 1-1-1v-8z" fill="none" stroke="#6C707E" stroke-width="1"/><path d="M1.5 5.5h3v-3" fill="none" stroke="#6C707E" stroke-width="1"/></svg><div class="t" style="left:1394px;top:960.5px;">DependencyResolutionItem.java</div><div class="t" style="left:43px;top:981.5px;">Internal</div><svg style="position:absolute;left:173px;top:982.5px;" width="12" height="16" viewBox="0 0 12 16"><path d="M4.5 2.5h5a1 1 0 0 1 1 1v10a1 1 0 0 1-1 1h-7a1 1 0 0 1-1-1v-8z" fill="none" stroke="#6C707E" stroke-width="1"/><path d="M1.5 5.5h3v-3" fill="none" stroke="#6C707E" stroke-width="1"/></svg><div class="t" style="left:191px;top:981.5px;">KotlinExternalModelBuilder.java</div><div class="t" style="left:480px;top:981.5px;width:115px;text-align:right">1234</div><svg style="position:absolute;left:601px;top:984.0px;" width="15" height="15" viewBox="0 0 15 15"><circle cx="7.5" cy="7.5" r="6.2" fill="#FDEBDB" stroke="#E2711D" stroke-width="1.3"/><text x="7.5" y="10.8" text-anchor="middle" font-family="Liberation Sans" font-size="9.5" fill="#E2711D" stroke="#E2711D" stroke-width="0.35">f</text></svg><div class="t" style="left:621px;top:981.5px;">m_externalBuilder</div><div class="t" style="left:859px;top:981.5px;">Uses</div><svg style="position:absolute;left:1116px;top:984.0px;" width="15" height="15" viewBox="0 0 15 15"><circle cx="7.5" cy="7.5" r="6.2" fill="none" stroke="#3C9F4A" stroke-width="1.3"/><path d="M5.6 4.5h3.8M7.5 4.5v6M5.6 10.5h3.8" stroke="#3C9F4A" stroke-width="1.3"/></svg><div class="t" style="left:1136px;top:981.5px;">IExternalModelBuilder</div><svg style="position:absolute;left:1376px;top:982.5px;" width="12" height="16" viewBox="0 0 12 16"><path d="M4.5 2.5h5a1 1 0 0 1 1 1v10a1 1 0 0 1-1 1h-7a1 1 0 0 1-1-1v-8z" fill="none" stroke="#6C707E" stroke-width="1"/><path d="M1.5 5.5h3v-3" fill="none" stroke="#6C707E" stroke-width="1"/></svg><div class="t" style="left:1394px;top:981.5px;">IExternalModelBuilder.java</div><div style="left:1631px;top:795px;width:7px;height:95px;background:#C9CACE;border-radius:4px"></div><div style="left:1642px;top:725px;width:1px;height:281px;background:#EBECF0"></div><div style="left:0;top:1005px;width:1683px;height:1px;background:#EBECF0"></div><div style="left:0;top:1006px;width:1683px;height:25px;background:#F7F8FA"></div><div style="left:13px;top:1015px;width:8px;height:8px;border:1.2px solid #3574F0;border-radius:2px"></div><div class="t" style="left:24px;top:1010px;color:#5A5D63;font-size:13.6px">arctree</div><div class="t" style="left:92px;top:1010px;color:#5A5D63;font-size:13.6px">src</div><div style="left:137px;top:1015px;width:8px;height:8px;border:1.2px solid #3574F0;border-radius:2px"></div><div class="t" style="left:148px;top:1010px;color:#5A5D63;font-size:13.6px">main</div><div class="t" style="left:201px;top:1010px;color:#5A5D63;font-size:13.6px">java</div><div class="t" style="left:250px;top:1010px;color:#5A5D63;font-size:13.6px">com</div><div class="t" style="left:302px;top:1010px;color:#5A5D63;font-size:13.6px">hello2morrow</div><div class="t" style="left:411px;top:1010px;color:#5A5D63;font-size:13.6px">arctree</div><div class="t" style="left:479px;top:1010px;color:#5A5D63;font-size:13.6px">psi</div><div class="t" style="left:521px;top:1010px;color:#5A5D63;font-size:13.6px">controller</div><div class="t" style="left:604px;top:1010px;color:#5A5D63;font-size:13.6px">kotlin</div><svg style="position:absolute;left:72px;top:1011px;" width="16" height="16" viewBox="0 0 16 16"><path d="M6.2 4.1l3.9 3.9-3.9 3.9" stroke="#8C8F96" stroke-width="1.2" fill="none"/></svg><svg style="position:absolute;left:116px;top:1011px;" width="16" height="16" viewBox="0 0 16 16"><path d="M6.2 4.1l3.9 3.9-3.9 3.9" stroke="#8C8F96" stroke-width="1.2" fill="none"/></svg><svg style="position:absolute;left:182px;top:1011px;" width="16" height="16" viewBox="0 0 16 16"><path d="M6.2 4.1l3.9 3.9-3.9 3.9" stroke="#8C8F96" stroke-width="1.2" fill="none"/></svg><svg style="position:absolute;left:231px;top:1011px;" width="16" height="16" viewBox="0 0 16 16"><path d="M6.2 4.1l3.9 3.9-3.9 3.9" stroke="#8C8F96" stroke-width="1.2" fill="none"/></svg><svg style="position:absolute;left:282px;top:1011px;" width="16" height="16" viewBox="0 0 16 16"><path d="M6.2 4.1l3.9 3.9-3.9 3.9" stroke="#8C8F96" stroke-width="1.2" fill="none"/></svg><svg style="position:absolute;left:391px;top:1011px;" width="16" height="16" viewBox="0 0 16 16"><path d="M6.2 4.1l3.9 3.9-3.9 3.9" stroke="#8C8F96" stroke-width="1.2" fill="none"/></svg><svg style="position:absolute;left:459px;top:1011px;" width="16" height="16" viewBox="0 0 16 16"><path d="M6.2 4.1l3.9 3.9-3.9 3.9" stroke="#8C8F96" stroke-width="1.2" fill="none"/></svg><svg style="position:absolute;left:502px;top:1011px;" width="16" height="16" viewBox="0 0 16 16"><path d="M6.2 4.1l3.9 3.9-3.9 3.9" stroke="#8C8F96" stroke-width="1.2" fill="none"/></svg><svg style="position:absolute;left:585px;top:1011px;" width="16" height="16" viewBox="0 0 16 16"><path d="M6.2 4.1l3.9 3.9-3.9 3.9" stroke="#8C8F96" stroke-width="1.2" fill="none"/></svg><svg style="position:absolute;left:643px;top:1011px;" width="16" height="16" viewBox="0 0 16 16"><path d="M6.2 4.1l3.9 3.9-3.9 3.9" stroke="#8C8F96" stroke-width="1.2" fill="none"/></svg><svg style="position:absolute;left:663px;top:1011px;" width="16" height="16" viewBox="0 0 16 16"><circle cx="8" cy="8" r="6.4" fill="none" stroke="#4682FA" stroke-width="1.35"/><path d="M10.3 6.2A2.9 2.9 0 1 0 10.3 9.8" fill="none" stroke="#4682FA" stroke-width="1.3"/></svg><div class="t" style="left:683px;top:1010px;color:#5A5D63;font-size:13.6px">KotlinObjectCreator</div><div class="t" style="left:1405px;top:1010px;color:#5A5D63">37:41</div><div class="t" style="left:1455px;top:1010px;color:#5A5D63">LF</div><div class="t" style="left:1486px;top:1010px;color:#5A5D63">UTF-8</div><svg style="position:absolute;left:1542px;top:1011px;" width="16" height="16" viewBox="0 0 16 16"><path d="M8 1.5l3 4H9.5l3 4H10.5l3 3.5h-11l3-3.5H3.5l3-4H5z" fill="none" stroke="#6C707E" stroke-width="1.1" stroke-linejoin="round"/><path d="M8 13v2.5" stroke="#6C707E" stroke-width="1.2"/></svg><div class="t" style="left:1578px;top:1010px;color:#5A5D63">4 spaces</div><svg style="position:absolute;left:1650px;top:1011px;" width="16" height="16" viewBox="0 0 16 16"><rect x="2" y="7.5" width="9" height="7" rx="1" fill="none" stroke="#6C707E" stroke-width="1.2"/><path d="M9 7.5V5a2.5 2.5 0 0 1 5 0v1.5" fill="none" stroke="#6C707E" stroke-width="1.2"/><circle cx="6.5" cy="11" r="1" fill="#6C707E"/></svg><div style="left:0;top:36px;width:38px;height:970px;background:#F7F8FA;border-right:1px solid #EBECF0"></div><div style="left:3px;top:42px;width:30px;height:30px;border-radius:6px;background:#3574F0"></div><svg style="position:absolute;left:8px;top:47px;" width="20" height="20" viewBox="0 0 20 20"><path d="M2 5a1.5 1.5 0 0 1 1.5-1.5h4.3l2 2h6.7a1.5 1.5 0 0 1 1.5 1.5v8a1.5 1.5 0 0 1-1.5 1.5h-13A1.5 1.5 0 0 1 2 15z" fill="none" stroke="#fff" stroke-width="1.6" stroke-linejoin="round"/></svg><svg style="position:absolute;left:8px;top:87px;" width="20" height="20" viewBox="0 0 20 20"><circle cx="10" cy="10" r="3.2" fill="none" stroke="#6C707E" stroke-width="1.5"/><path d="M1 10h5.8M13.2 10H19" stroke="#6C707E" stroke-width="1.5"/></svg><div style="left:6px;top:122px;width:24px;height:1px;background:#DFE1E5"></div><svg style="position:absolute;left:8px;top:138px;" width="20" height="20" viewBox="0 0 20 20"><path d="M3.5 2v16" stroke="#6C707E" stroke-width="1.5"/><rect x="6" y="3" width="11" height="5" rx="1.5" fill="none" stroke="#6C707E" stroke-width="1.4"/><rect x="6" y="11" width="11" height="5.5" rx="1.5" fill="none" stroke="#6C707E" stroke-width="1.4"/><path d="M3.5 5.5H6M3.5 13.7H6" stroke="#6C707E" stroke-width="1.4"/></svg><svg style="position:absolute;left:8px;top:177px;" width="20" height="20" viewBox="0 0 20 20"><circle cx="3.5" cy="10" r="1.4" fill="#6C707E"/><circle cx="10" cy="10" r="1.4" fill="#6C707E"/><circle cx="16.5" cy="10" r="1.4" fill="#6C707E"/></svg><svg style="position:absolute;left:8px;top:775px;" width="20" height="20" viewBox="0 0 20 20"><rect x="1.5" y="2.5" width="17" height="15" rx="1" fill="#B4C0D3" stroke="#76849C" stroke-width="1"/><rect x="1.5" y="2.5" width="17" height="3.5" fill="#76849C"/><path d="M2 9h16M2 12h16M2 15h16M6 6v11" stroke="#F2F4F8" stroke-width="1"/></svg><div style="left:3px;top:810px;width:30px;height:30px;border-radius:6px;background:#DFE1E5"></div><svg style="position:absolute;left:8px;top:815px;" width="22" height="22" viewBox="0 0 22 22"><path d="M0.8 6L5.8 1V4H15.5V8H5.8V11z" fill="#F5C342" stroke="#C98A1D" stroke-width="1" stroke-linejoin="round"/><path d="M19.5 14.5L14.5 9.5V12.5H4V16.5H14.5V19.5z" fill="#F5C342" stroke="#C98A1D" stroke-width="1" stroke-linejoin="round"/></svg><svg style="position:absolute;left:8px;top:855px;" width="20" height="20" viewBox="0 0 20 20"><path d="M5 2.5h10l4 7.5-4 7.5H5L1 10z" fill="none" stroke="#6C707E" stroke-width="1.4" stroke-linejoin="round"/><path d="M8 6.5v7l5.5-3.5z" fill="none" stroke="#6C707E" stroke-width="1.3" stroke-linejoin="round"/></svg><svg style="position:absolute;left:8px;top:895px;" width="20" height="20" viewBox="0 0 20 20"><rect x="1.5" y="2.5" width="17" height="15" rx="1.5" fill="none" stroke="#6C707E" stroke-width="1.4"/><path d="M5 7l3 2.5-3 2.5M10 13h5" fill="none" stroke="#6C707E" stroke-width="1.4"/></svg><svg style="position:absolute;left:8px;top:935px;" width="20" height="20" viewBox="0 0 20 20"><circle cx="10" cy="10" r="8" fill="none" stroke="#6C707E" stroke-width="1.5"/><path d="M10 5v6.5" stroke="#6C707E" stroke-width="1.8"/><circle cx="10" cy="14.5" r="1.1" fill="#6C707E"/></svg><svg style="position:absolute;left:8px;top:975px;" width="20" height="20" viewBox="0 0 20 20"><circle cx="5" cy="4.5" r="2.2" fill="none" stroke="#6C707E" stroke-width="1.4"/><circle cx="15" cy="5.5" r="2.2" fill="none" stroke="#6C707E" stroke-width="1.4"/><path d="M5 6.7v12M15 7.7c0 4-10 3-10 7.5" fill="none" stroke="#6C707E" stroke-width="1.4"/></svg></body></html>
